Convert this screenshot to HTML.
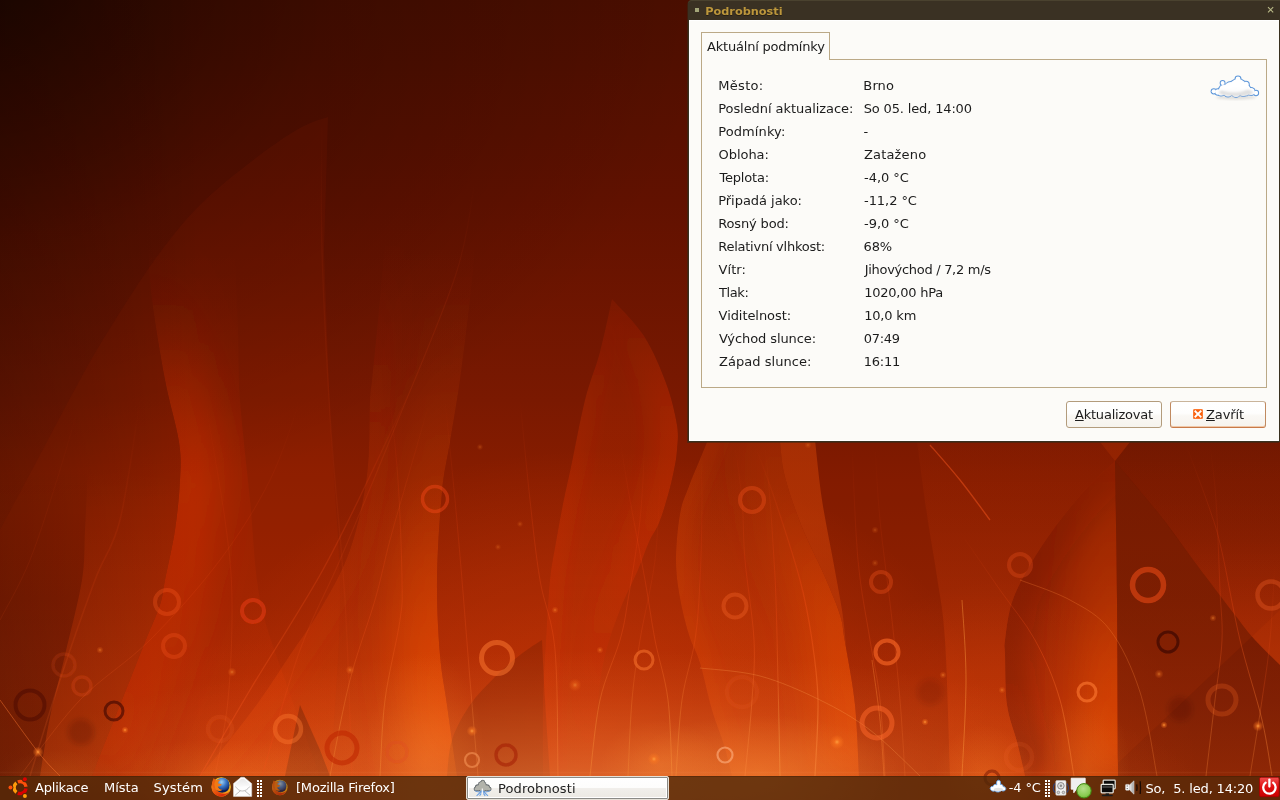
<!DOCTYPE html>
<html lang="cs">
<head>
<meta charset="utf-8">
<title>Podrobnosti</title>
<style>
*{box-sizing:border-box;margin:0;padding:0}
html,body{width:1280px;height:800px;overflow:hidden;background:#5a1202}
body{position:relative;font-family:"DejaVu Sans","Liberation Sans",sans-serif;font-size:13px;color:#1c1c1c;line-height:15px}
#wall{position:absolute;left:0;top:0;width:1280px;height:800px;display:block}
.abs{position:absolute;white-space:nowrap}
#win{position:absolute;left:688px;top:0;width:592px;height:442px;background:#39301f;border-radius:4px 0 0 0;box-shadow:-1px 1px 0 rgba(52,42,24,0.55)}
#title{position:absolute;left:688px;top:0;width:592px;height:20px;background:#3a3123;border-top:1px solid #4a422f;border-radius:4px 0 0 0}
#tdot{position:absolute;left:695px;top:8px;width:4px;height:4px;background:#a3a578}
#ttxt{position:absolute;left:705.2px;top:5px;text-shadow:0 1px 0 rgba(20,14,4,0.5);font-weight:bold;font-size:11.3px;letter-spacing:0px;line-height:13px;color:#bd973c;white-space:nowrap}
#tx{position:absolute;left:1267px;top:6px;width:7px;height:7px}
#body{position:absolute;left:689px;top:20px;width:590px;height:421px;background:#fcfbf8;border-top:1px solid #fff;border-left:1px solid #fff;border-bottom:1px solid #fff}
#nb{position:absolute;left:701px;top:59px;width:566px;height:329px;border:1px solid #bba987}
#tab{position:absolute;left:701px;top:32px;width:129px;height:28px;border:1px solid #bba987;border-bottom:none;background:#fcfbf8}
#tabt{position:absolute;left:707px;top:39px;white-space:nowrap;letter-spacing:-0.2px}
.l,.v{position:absolute;white-space:nowrap;height:15px}
.l{left:718.6px}
.v{left:863.5px}
.btn{position:absolute;top:401px;width:96px;height:27px;border:1px solid #b39c7c;border-radius:3px;background:linear-gradient(#ffffff 0,#fefefd 45%,#faf8f4 55%,#f6f3ed 100%)}
.bt{position:absolute;top:407px;white-space:nowrap}
.bt u{text-decoration:underline;text-decoration-thickness:1px;text-underline-offset:1px}
#bz{border-color:#c9b49a #c08a60 #c87a48 #c08a60;box-shadow:inset 0 -1px 0 #f0c8a8}
#panel{position:absolute;left:0;top:776px;width:1280px;height:24px;background:rgba(72,38,8,0.76);border-top:1px solid rgba(60,24,0,0.35)}
.pt{position:absolute;top:780px;color:#fff;white-space:nowrap;font-size:13px}
#task{position:absolute;left:466px;top:776px;width:203px;height:24px;border:1px solid #e6e0d6;border-radius:2px;background:linear-gradient(#ffffff 0,#fdfdfc 48%,#f1efeb 52%,#ebe8e2 100%);box-shadow:inset 0 0 0 1px #8a8a86,inset 0 0 0 2px #fff}
.l,.v,.bt,.pt,#tabt{transform:translateZ(0);filter:grayscale(1)}
#ttxt{transform:translateZ(0)}
</style>
</head>
<body>
<svg id="wall" viewBox="0 0 1280 800" width="1280" height="800">
<defs><linearGradient id="base" x1="0" y1="0" x2="0" y2="800" gradientUnits="userSpaceOnUse">
<stop offset="0" stop-color="#4b0e00"/>
<stop offset="0.25" stop-color="#611100"/>
<stop offset="0.5" stop-color="#7a1901"/>
<stop offset="0.6" stop-color="#881d00"/>
<stop offset="0.75" stop-color="#942202"/>
<stop offset="0.875" stop-color="#a52a05"/>
<stop offset="0.97" stop-color="#ae3107"/>
</linearGradient>
<radialGradient id="dk" cx="0" cy="0" r="1" gradientUnits="userSpaceOnUse" gradientTransform="translate(-40 -40) scale(760 560)">
<stop offset="0" stop-color="#000" stop-opacity="0.62"/>
<stop offset="0.22" stop-color="#000" stop-opacity="0.42"/>
<stop offset="0.5" stop-color="#000" stop-opacity="0.20"/>
<stop offset="1" stop-color="#000" stop-opacity="0"/>
</radialGradient>
<linearGradient id="dkl" x1="0" y1="0" x2="200" y2="0" gradientUnits="userSpaceOnUse">
<stop offset="0" stop-color="#000" stop-opacity="0.22"/>
<stop offset="1" stop-color="#000" stop-opacity="0"/>
</linearGradient>
<radialGradient id="glow" cx="0.5" cy="0.5" r="0.5">
<stop offset="0" stop-color="#ff8a28" stop-opacity="0.55"/>
<stop offset="1" stop-color="#ff8a28" stop-opacity="0"/>
</radialGradient>
<radialGradient id="cglow" cx="0.5" cy="0.5" r="0.5">
<stop offset="0" stop-color="#ff4a06" stop-opacity="0.34"/>
<stop offset="0.6" stop-color="#ff4a06" stop-opacity="0.18"/>
<stop offset="1" stop-color="#ff4a06" stop-opacity="0"/>
</radialGradient>
<radialGradient id="spot" cx="0.5" cy="0.5" r="0.5">
<stop offset="0" stop-color="#ffa040" stop-opacity="0.95"/>
<stop offset="0.4" stop-color="#ff7a20" stop-opacity="0.5"/>
<stop offset="1" stop-color="#ff7a20" stop-opacity="0"/>
</radialGradient>
<filter id="b1" x="-20%" y="-20%" width="140%" height="140%"><feGaussianBlur stdDeviation="0.7"/></filter>
<filter id="b3" x="-30%" y="-30%" width="160%" height="160%"><feGaussianBlur stdDeviation="2.5"/></filter>
<linearGradient id="g1" x1="0" y1="0" x2="0" y2="800" gradientUnits="userSpaceOnUse"><stop offset="0.588" stop-color="#ff5a0c" stop-opacity="0.000"/><stop offset="0.700" stop-color="#ff5a0c" stop-opacity="0.080"/><stop offset="0.850" stop-color="#ff5a0c" stop-opacity="0.140"/><stop offset="0.970" stop-color="#ff5a0c" stop-opacity="0.180"/></linearGradient>
<linearGradient id="g2" x1="0" y1="0" x2="0" y2="800" gradientUnits="userSpaceOnUse"><stop offset="0.588" stop-color="#200600" stop-opacity="0.000"/><stop offset="0.750" stop-color="#200600" stop-opacity="0.140"/><stop offset="0.970" stop-color="#200600" stop-opacity="0.220"/></linearGradient>
<linearGradient id="g3" x1="0" y1="0" x2="0" y2="800" gradientUnits="userSpaceOnUse"><stop offset="0.312" stop-color="#ff3c00" stop-opacity="0.000"/><stop offset="0.412" stop-color="#ff3c00" stop-opacity="0.030"/><stop offset="0.550" stop-color="#ff3c00" stop-opacity="0.070"/><stop offset="0.970" stop-color="#ff3c00" stop-opacity="0.080"/></linearGradient>
<linearGradient id="g4" x1="0" y1="0" x2="0" y2="800" gradientUnits="userSpaceOnUse"><stop offset="0.312" stop-color="#ff3c00" stop-opacity="0.000"/><stop offset="0.400" stop-color="#ff3c00" stop-opacity="0.060"/><stop offset="0.500" stop-color="#ff3c00" stop-opacity="0.260"/><stop offset="0.600" stop-color="#ff3c00" stop-opacity="0.320"/><stop offset="0.750" stop-color="#ff3c00" stop-opacity="0.280"/><stop offset="0.970" stop-color="#ff3c00" stop-opacity="0.340"/></linearGradient>
<clipPath id="c1"><path d="M148.0 250.0C148.7 258.3 149.2 278.3 152.0 300.0C154.8 321.7 160.5 356.3 165.0 380.0C169.5 403.7 176.5 425.3 179.0 442.0C181.5 458.7 180.7 465.3 180.0 480.0C179.3 494.7 177.5 513.3 175.0 530.0C172.5 546.7 167.5 567.5 165.0 580.0C162.5 592.5 163.3 594.7 160.0 605.0C156.7 615.3 151.7 625.3 145.0 642.0C138.3 658.7 127.5 686.2 120.0 705.0C112.5 723.8 104.7 743.2 100.0 755.0C95.3 766.8 93.3 772.5 92.0 776.0L204.0 776.0C205.3 772.5 207.3 766.8 212.0 755.0C216.7 743.2 224.5 723.8 232.0 705.0C239.5 686.2 250.3 658.7 257.0 642.0C263.7 625.3 268.7 615.3 272.0 605.0C275.3 594.7 274.5 592.5 277.0 580.0C279.5 567.5 284.5 546.7 287.0 530.0C289.5 513.3 291.3 494.7 292.0 480.0C292.7 465.3 293.5 458.7 291.0 442.0C288.5 425.3 281.5 403.7 277.0 380.0C272.5 356.3 266.8 321.7 264.0 300.0C261.2 278.3 260.7 258.3 260.0 250.0Z"/></clipPath>
<filter id="f1" filterUnits="userSpaceOnUse" x="0" y="0" width="1280" height="800"><feGaussianBlur stdDeviation="20.0"/></filter>
<clipPath id="k1"><path d="M148.0 250.0C148.7 258.3 149.2 278.3 152.0 300.0C154.8 321.7 160.5 356.3 165.0 380.0C169.5 403.7 176.5 425.3 179.0 442.0C181.5 458.7 180.7 465.3 180.0 480.0C179.3 494.7 177.5 513.3 175.0 530.0C172.5 546.7 167.5 567.5 165.0 580.0C162.5 592.5 163.3 594.7 160.0 605.0C156.7 615.3 151.7 625.3 145.0 642.0C138.3 658.7 127.5 686.2 120.0 705.0C112.5 723.8 104.7 743.2 100.0 755.0C95.3 766.8 93.3 772.5 92.0 776.0L320.0 776.0C317.5 769.2 310.8 751.0 305.0 735.0C299.2 719.0 292.5 702.5 285.0 680.0C277.5 657.5 265.8 630.0 260.0 600.0C254.2 570.0 253.3 533.3 250.0 500.0C246.7 466.7 242.0 428.3 240.0 400.0C238.0 371.7 238.8 355.0 238.0 330.0C237.2 305.0 235.5 263.3 235.0 250.0Z"/></clipPath>
<linearGradient id="g5" x1="0" y1="0" x2="0" y2="800" gradientUnits="userSpaceOnUse"><stop offset="0.300" stop-color="#ff5a0c" stop-opacity="0.000"/><stop offset="0.475" stop-color="#ff5a0c" stop-opacity="0.030"/><stop offset="0.625" stop-color="#ff5a0c" stop-opacity="0.060"/><stop offset="0.750" stop-color="#ff5a0c" stop-opacity="0.080"/><stop offset="0.850" stop-color="#ff5a0c" stop-opacity="0.140"/><stop offset="0.970" stop-color="#ff5a0c" stop-opacity="0.160"/></linearGradient>
<linearGradient id="g6" x1="0" y1="0" x2="0" y2="800" gradientUnits="userSpaceOnUse"><stop offset="0.312" stop-color="#ff5a0c" stop-opacity="0.000"/><stop offset="0.475" stop-color="#ff5a0c" stop-opacity="0.050"/><stop offset="0.625" stop-color="#ff5a0c" stop-opacity="0.160"/><stop offset="0.750" stop-color="#ff5a0c" stop-opacity="0.340"/><stop offset="0.875" stop-color="#ff5a0c" stop-opacity="0.420"/><stop offset="0.970" stop-color="#ff5a0c" stop-opacity="0.420"/></linearGradient>
<clipPath id="c2"><path d="M475.0 250.0C474.2 258.3 472.5 278.3 470.0 300.0C467.5 321.7 463.3 356.3 460.0 380.0C456.7 403.7 453.0 423.3 450.0 442.0C447.0 460.7 444.2 469.0 442.0 492.0C439.8 515.0 437.3 552.8 437.0 580.0C436.7 607.2 438.3 634.2 440.0 655.0C441.7 675.8 444.2 684.8 447.0 705.0C449.8 725.2 455.3 764.2 457.0 776.0L331.0 776.0C329.3 764.2 323.8 725.2 321.0 705.0C318.2 684.8 315.7 675.8 314.0 655.0C312.3 634.2 310.7 607.2 311.0 580.0C311.3 552.8 313.8 515.0 316.0 492.0C318.2 469.0 321.0 460.7 324.0 442.0C327.0 423.3 330.7 403.7 334.0 380.0C337.3 356.3 341.5 321.7 344.0 300.0C346.5 278.3 348.2 258.3 349.0 250.0Z"/></clipPath>
<filter id="f2" filterUnits="userSpaceOnUse" x="0" y="0" width="1280" height="800"><feGaussianBlur stdDeviation="22.5"/></filter>
<clipPath id="k2"><path d="M385.0 240.0C383.8 253.3 380.2 296.7 378.0 320.0C375.8 343.3 373.3 366.7 372.0 380.0C370.7 393.3 370.8 384.2 370.0 400.0C369.2 415.8 370.3 450.0 367.0 475.0C363.7 500.0 357.8 527.5 350.0 550.0C342.2 572.5 330.0 592.5 320.0 610.0C310.0 627.5 300.0 640.0 290.0 655.0C280.0 670.0 270.3 685.5 260.0 700.0C249.7 714.5 238.0 729.3 228.0 742.0C218.0 754.7 204.7 770.3 200.0 776.0L457.0 776.0C455.3 764.2 449.8 725.2 447.0 705.0C444.2 684.8 441.7 675.8 440.0 655.0C438.3 634.2 436.7 607.2 437.0 580.0C437.3 552.8 439.8 515.0 442.0 492.0C444.2 469.0 447.0 460.7 450.0 442.0C453.0 423.3 456.7 403.7 460.0 380.0C463.3 356.3 467.5 321.7 470.0 300.0C472.5 278.3 474.2 258.3 475.0 250.0Z"/></clipPath>
<linearGradient id="g7" x1="0" y1="0" x2="0" y2="800" gradientUnits="userSpaceOnUse"><stop offset="0.300" stop-color="#ff3c00" stop-opacity="0.000"/><stop offset="0.475" stop-color="#ff3c00" stop-opacity="0.050"/><stop offset="0.625" stop-color="#ff3c00" stop-opacity="0.080"/><stop offset="0.812" stop-color="#ff3c00" stop-opacity="0.080"/><stop offset="0.970" stop-color="#ff3c00" stop-opacity="0.080"/></linearGradient>
<clipPath id="c3"><path d="M385.0 240.0C383.8 253.3 380.2 296.7 378.0 320.0C375.8 343.3 373.3 366.7 372.0 380.0C370.7 393.3 370.8 384.2 370.0 400.0C369.2 415.8 370.3 450.0 367.0 475.0C363.7 500.0 357.8 527.5 350.0 550.0C342.2 572.5 330.0 592.5 320.0 610.0C310.0 627.5 300.0 640.0 290.0 655.0C280.0 670.0 270.3 685.5 260.0 700.0C249.7 714.5 238.0 729.3 228.0 742.0C218.0 754.7 204.7 770.3 200.0 776.0L256.0 776.0C260.7 770.3 274.0 754.7 284.0 742.0C294.0 729.3 305.7 714.5 316.0 700.0C326.3 685.5 336.0 670.0 346.0 655.0C356.0 640.0 366.0 627.5 376.0 610.0C386.0 592.5 398.2 572.5 406.0 550.0C413.8 527.5 419.7 500.0 423.0 475.0C426.3 450.0 425.2 415.8 426.0 400.0C426.8 384.2 426.7 393.3 428.0 380.0C429.3 366.7 431.8 343.3 434.0 320.0C436.2 296.7 439.8 253.3 441.0 240.0Z"/></clipPath>
<filter id="f3" filterUnits="userSpaceOnUse" x="0" y="0" width="1280" height="800"><feGaussianBlur stdDeviation="10.0"/></filter>
<clipPath id="k3"><path d="M385.0 240.0C383.8 253.3 380.2 296.7 378.0 320.0C375.8 343.3 373.3 366.7 372.0 380.0C370.7 393.3 370.8 384.2 370.0 400.0C369.2 415.8 370.3 450.0 367.0 475.0C363.7 500.0 357.8 527.5 350.0 550.0C342.2 572.5 330.0 592.5 320.0 610.0C310.0 627.5 300.0 640.0 290.0 655.0C280.0 670.0 270.3 685.5 260.0 700.0C249.7 714.5 238.0 729.3 228.0 742.0C218.0 754.7 204.7 770.3 200.0 776.0L457.0 776.0C455.3 764.2 449.8 725.2 447.0 705.0C444.2 684.8 441.7 675.8 440.0 655.0C438.3 634.2 436.7 607.2 437.0 580.0C437.3 552.8 439.8 515.0 442.0 492.0C444.2 469.0 447.0 460.7 450.0 442.0C453.0 423.3 456.7 403.7 460.0 380.0C463.3 356.3 467.5 321.7 470.0 300.0C472.5 278.3 474.2 258.3 475.0 250.0Z"/></clipPath>
<linearGradient id="g8" x1="0" y1="0" x2="0" y2="800" gradientUnits="userSpaceOnUse"><stop offset="0.374" stop-color="#ff3c00" stop-opacity="0.080"/><stop offset="0.500" stop-color="#ff3c00" stop-opacity="0.140"/><stop offset="0.650" stop-color="#ff3c00" stop-opacity="0.140"/><stop offset="0.800" stop-color="#ff3c00" stop-opacity="0.060"/><stop offset="0.970" stop-color="#ff3c00" stop-opacity="0.040"/></linearGradient>
<linearGradient id="g9" x1="0" y1="0" x2="0" y2="800" gradientUnits="userSpaceOnUse"><stop offset="0.374" stop-color="#ff3c00" stop-opacity="0.000"/><stop offset="0.450" stop-color="#ff3c00" stop-opacity="0.080"/><stop offset="0.550" stop-color="#ff3c00" stop-opacity="0.180"/><stop offset="0.675" stop-color="#ff3c00" stop-opacity="0.140"/><stop offset="0.800" stop-color="#ff3c00" stop-opacity="0.040"/><stop offset="0.970" stop-color="#ff3c00" stop-opacity="0.000"/></linearGradient>
<clipPath id="c4"><path d="M612.0 299.0C617.3 305.2 635.0 322.0 644.0 336.0C653.0 350.0 660.5 368.2 666.0 383.0C671.5 397.8 675.2 413.8 677.0 425.0C678.8 436.2 677.5 442.5 677.0 450.0C676.5 457.5 675.5 462.5 674.0 470.0C672.5 477.5 670.5 486.2 668.0 495.0C665.5 503.8 662.2 515.2 659.0 523.0C655.8 530.8 652.5 534.2 649.0 542.0C645.5 549.8 642.8 558.7 638.0 570.0C633.2 581.3 625.7 595.0 620.0 610.0C614.3 625.0 608.0 641.7 604.0 660.0C600.0 678.3 598.0 700.7 596.0 720.0C594.0 739.3 592.7 766.7 592.0 776.0L522.0 776.0C522.7 766.7 524.0 739.3 526.0 720.0C528.0 700.7 530.0 678.3 534.0 660.0C538.0 641.7 544.3 625.0 550.0 610.0C555.7 595.0 563.2 581.3 568.0 570.0C572.8 558.7 575.5 549.8 579.0 542.0C582.5 534.2 585.8 530.8 589.0 523.0C592.2 515.2 595.5 503.8 598.0 495.0C600.5 486.2 602.5 477.5 604.0 470.0C605.5 462.5 606.5 457.5 607.0 450.0C607.5 442.5 608.8 436.2 607.0 425.0C605.2 413.8 601.5 397.8 596.0 383.0C590.5 368.2 583.0 350.0 574.0 336.0C565.0 322.0 547.3 305.2 542.0 299.0Z"/></clipPath>
<filter id="f4" filterUnits="userSpaceOnUse" x="0" y="0" width="1280" height="800"><feGaussianBlur stdDeviation="12.5"/></filter>
<clipPath id="k4"><path d="M612.0 299.0C617.3 305.2 635.0 322.0 644.0 336.0C653.0 350.0 660.5 368.2 666.0 383.0C671.5 397.8 675.2 413.8 677.0 425.0C678.8 436.2 677.5 442.5 677.0 450.0C676.5 457.5 675.5 462.5 674.0 470.0C672.5 477.5 670.5 486.2 668.0 495.0C665.5 503.8 662.2 515.2 659.0 523.0C655.8 530.8 652.5 534.2 649.0 542.0C645.5 549.8 642.8 558.7 638.0 570.0C633.2 581.3 625.7 595.0 620.0 610.0C614.3 625.0 608.0 641.7 604.0 660.0C600.0 678.3 598.0 700.7 596.0 720.0C594.0 739.3 592.7 766.7 592.0 776.0L543.0 776.0C543.0 763.3 542.5 722.7 543.0 700.0C543.5 677.3 544.8 660.0 546.0 640.0C547.2 620.0 548.3 596.3 550.0 580.0C551.7 563.7 553.8 554.7 556.0 542.0C558.2 529.3 560.5 516.5 563.0 504.0C565.5 491.5 567.3 484.3 571.0 467.0C574.7 449.7 580.2 419.2 585.0 400.0C589.8 380.8 595.5 368.8 600.0 352.0C604.5 335.2 610.0 307.8 612.0 299.0Z"/></clipPath>
<linearGradient id="g10" x1="0" y1="0" x2="0" y2="800" gradientUnits="userSpaceOnUse"><stop offset="0.374" stop-color="#ff3c00" stop-opacity="0.000"/><stop offset="0.500" stop-color="#ff3c00" stop-opacity="0.060"/><stop offset="0.625" stop-color="#ff3c00" stop-opacity="0.100"/><stop offset="0.800" stop-color="#ff3c00" stop-opacity="0.100"/><stop offset="0.970" stop-color="#ff3c00" stop-opacity="0.100"/></linearGradient>
<clipPath id="c5"><path d="M612.0 299.0C610.0 307.8 604.5 335.2 600.0 352.0C595.5 368.8 589.8 380.8 585.0 400.0C580.2 419.2 574.7 449.7 571.0 467.0C567.3 484.3 565.5 491.5 563.0 504.0C560.5 516.5 558.2 529.3 556.0 542.0C553.8 554.7 551.7 563.7 550.0 580.0C548.3 596.3 547.2 620.0 546.0 640.0C544.8 660.0 543.5 677.3 543.0 700.0C542.5 722.7 543.0 763.3 543.0 776.0L585.0 776.0C585.0 763.3 584.5 722.7 585.0 700.0C585.5 677.3 586.8 660.0 588.0 640.0C589.2 620.0 590.3 596.3 592.0 580.0C593.7 563.7 595.8 554.7 598.0 542.0C600.2 529.3 602.5 516.5 605.0 504.0C607.5 491.5 609.3 484.3 613.0 467.0C616.7 449.7 622.2 419.2 627.0 400.0C631.8 380.8 637.5 368.8 642.0 352.0C646.5 335.2 652.0 307.8 654.0 299.0Z"/></clipPath>
<filter id="f5" filterUnits="userSpaceOnUse" x="0" y="0" width="1280" height="800"><feGaussianBlur stdDeviation="7.5"/></filter>
<clipPath id="k5"><path d="M612.0 299.0C617.3 305.2 635.0 322.0 644.0 336.0C653.0 350.0 660.5 368.2 666.0 383.0C671.5 397.8 675.2 413.8 677.0 425.0C678.8 436.2 677.5 442.5 677.0 450.0C676.5 457.5 675.5 462.5 674.0 470.0C672.5 477.5 670.5 486.2 668.0 495.0C665.5 503.8 662.2 515.2 659.0 523.0C655.8 530.8 652.5 534.2 649.0 542.0C645.5 549.8 642.8 558.7 638.0 570.0C633.2 581.3 625.7 595.0 620.0 610.0C614.3 625.0 608.0 641.7 604.0 660.0C600.0 678.3 598.0 700.7 596.0 720.0C594.0 739.3 592.7 766.7 592.0 776.0L543.0 776.0C543.0 763.3 542.5 722.7 543.0 700.0C543.5 677.3 544.8 660.0 546.0 640.0C547.2 620.0 548.3 596.3 550.0 580.0C551.7 563.7 553.8 554.7 556.0 542.0C558.2 529.3 560.5 516.5 563.0 504.0C565.5 491.5 567.3 484.3 571.0 467.0C574.7 449.7 580.2 419.2 585.0 400.0C589.8 380.8 595.5 368.8 600.0 352.0C604.5 335.2 610.0 307.8 612.0 299.0Z"/></clipPath>
<linearGradient id="g11" x1="0" y1="0" x2="0" y2="800" gradientUnits="userSpaceOnUse"><stop offset="0.525" stop-color="#ff5a0c" stop-opacity="0.100"/><stop offset="0.650" stop-color="#ff5a0c" stop-opacity="0.120"/><stop offset="0.800" stop-color="#ff5a0c" stop-opacity="0.160"/><stop offset="0.970" stop-color="#ff5a0c" stop-opacity="0.200"/></linearGradient>
<linearGradient id="g12" x1="0" y1="0" x2="0" y2="800" gradientUnits="userSpaceOnUse"><stop offset="0.525" stop-color="#ff5a0c" stop-opacity="0.080"/><stop offset="0.650" stop-color="#ff5a0c" stop-opacity="0.140"/><stop offset="0.750" stop-color="#ff5a0c" stop-opacity="0.300"/><stop offset="0.850" stop-color="#ff5a0c" stop-opacity="0.360"/><stop offset="0.970" stop-color="#ff5a0c" stop-opacity="0.340"/></linearGradient>
<clipPath id="c6"><path d="M778.0 420.0C778.3 423.7 778.8 432.5 780.0 442.0C781.2 451.5 781.3 462.8 785.0 477.0C788.7 491.2 795.3 510.3 802.0 527.0C808.7 543.7 818.7 562.3 825.0 577.0C831.3 591.7 836.7 604.2 840.0 615.0C843.3 625.8 842.5 627.0 845.0 642.0C847.5 657.0 852.7 682.7 855.0 705.0C857.3 727.3 858.3 764.2 859.0 776.0L747.0 776.0C746.3 764.2 745.3 727.3 743.0 705.0C740.7 682.7 735.5 657.0 733.0 642.0C730.5 627.0 731.3 625.8 728.0 615.0C724.7 604.2 719.3 591.7 713.0 577.0C706.7 562.3 696.7 543.7 690.0 527.0C683.3 510.3 676.7 491.2 673.0 477.0C669.3 462.8 669.2 451.5 668.0 442.0C666.8 432.5 666.3 423.7 666.0 420.0Z"/></clipPath>
<filter id="f6" filterUnits="userSpaceOnUse" x="0" y="0" width="1280" height="800"><feGaussianBlur stdDeviation="20.0"/></filter>
<clipPath id="k6"><path d="M714.0 420.0C712.8 423.7 711.2 431.0 707.0 442.0C702.8 453.0 693.5 474.0 689.0 486.0C684.5 498.0 682.2 501.7 680.0 514.0C677.8 526.3 676.0 546.0 676.0 560.0C676.0 574.0 677.8 585.5 680.0 598.0C682.2 610.5 685.7 624.2 689.0 635.0C692.3 645.8 696.2 650.5 700.0 663.0C703.8 675.5 708.0 696.3 712.0 710.0C716.0 723.7 720.7 734.0 724.0 745.0C727.3 756.0 730.7 770.8 732.0 776.0L859.0 776.0C858.3 764.2 857.3 727.3 855.0 705.0C852.7 682.7 847.5 657.0 845.0 642.0C842.5 627.0 843.3 625.8 840.0 615.0C836.7 604.2 831.3 591.7 825.0 577.0C818.7 562.3 808.7 543.7 802.0 527.0C795.3 510.3 788.7 491.2 785.0 477.0C781.3 462.8 781.2 451.5 780.0 442.0C778.8 432.5 778.3 423.7 778.0 420.0Z"/></clipPath>
<linearGradient id="g13" x1="0" y1="0" x2="0" y2="800" gradientUnits="userSpaceOnUse"><stop offset="0.525" stop-color="#ff5a0c" stop-opacity="0.340"/><stop offset="0.650" stop-color="#ff5a0c" stop-opacity="0.360"/><stop offset="0.750" stop-color="#ff5a0c" stop-opacity="0.300"/><stop offset="0.806" stop-color="#ff5a0c" stop-opacity="0.200"/></linearGradient>
<linearGradient id="g14" x1="0" y1="0" x2="0" y2="800" gradientUnits="userSpaceOnUse"><stop offset="0.525" stop-color="#ff5a0c" stop-opacity="0.100"/><stop offset="0.650" stop-color="#ff5a0c" stop-opacity="0.120"/><stop offset="0.800" stop-color="#ff5a0c" stop-opacity="0.100"/><stop offset="0.970" stop-color="#ff5a0c" stop-opacity="0.050"/></linearGradient>
<clipPath id="c7"><path d="M714.0 420.0C712.8 423.7 711.2 431.0 707.0 442.0C702.8 453.0 693.5 474.0 689.0 486.0C684.5 498.0 682.2 501.7 680.0 514.0C677.8 526.3 676.0 546.0 676.0 560.0C676.0 574.0 677.8 585.5 680.0 598.0C682.2 610.5 685.7 624.2 689.0 635.0C692.3 645.8 696.2 650.5 700.0 663.0C703.8 675.5 708.0 696.3 712.0 710.0C716.0 723.7 720.7 734.0 724.0 745.0C727.3 756.0 730.7 770.8 732.0 776.0L774.0 776.0C772.7 770.8 769.3 756.0 766.0 745.0C762.7 734.0 758.0 723.7 754.0 710.0C750.0 696.3 745.8 675.5 742.0 663.0C738.2 650.5 734.3 645.8 731.0 635.0C727.7 624.2 724.2 610.5 722.0 598.0C719.8 585.5 718.0 574.0 718.0 560.0C718.0 546.0 719.8 526.3 722.0 514.0C724.2 501.7 726.5 498.0 731.0 486.0C735.5 474.0 744.8 453.0 749.0 442.0C753.2 431.0 754.8 423.7 756.0 420.0Z"/></clipPath>
<filter id="f7" filterUnits="userSpaceOnUse" x="0" y="0" width="1280" height="800"><feGaussianBlur stdDeviation="7.5"/></filter>
<clipPath id="k7"><path d="M714.0 420.0C712.8 423.7 711.2 431.0 707.0 442.0C702.8 453.0 693.5 474.0 689.0 486.0C684.5 498.0 682.2 501.7 680.0 514.0C677.8 526.3 676.0 546.0 676.0 560.0C676.0 574.0 677.8 585.5 680.0 598.0C682.2 610.5 685.7 624.2 689.0 635.0C692.3 645.8 696.2 650.5 700.0 663.0C703.8 675.5 708.0 696.3 712.0 710.0C716.0 723.7 720.7 734.0 724.0 745.0C727.3 756.0 730.7 770.8 732.0 776.0L859.0 776.0C858.3 764.2 857.3 727.3 855.0 705.0C852.7 682.7 847.5 657.0 845.0 642.0C842.5 627.0 843.3 625.8 840.0 615.0C836.7 604.2 831.3 591.7 825.0 577.0C818.7 562.3 808.7 543.7 802.0 527.0C795.3 510.3 788.7 491.2 785.0 477.0C781.3 462.8 781.2 451.5 780.0 442.0C778.8 432.5 778.3 423.7 778.0 420.0Z"/></clipPath>
<linearGradient id="g15" x1="0" y1="0" x2="0" y2="800" gradientUnits="userSpaceOnUse"><stop offset="0.550" stop-color="#ff5a0c" stop-opacity="0.000"/><stop offset="0.650" stop-color="#ff5a0c" stop-opacity="0.040"/><stop offset="0.800" stop-color="#ff5a0c" stop-opacity="0.120"/><stop offset="0.970" stop-color="#ff5a0c" stop-opacity="0.180"/></linearGradient>
<linearGradient id="g16" x1="0" y1="0" x2="0" y2="800" gradientUnits="userSpaceOnUse"><stop offset="0.576" stop-color="#ff3c00" stop-opacity="0.060"/><stop offset="0.750" stop-color="#ff3c00" stop-opacity="0.030"/><stop offset="0.970" stop-color="#ff3c00" stop-opacity="0.000"/></linearGradient>
<linearGradient id="g17" x1="0" y1="0" x2="0" y2="800" gradientUnits="userSpaceOnUse"><stop offset="0.576" stop-color="#ff5a0c" stop-opacity="0.040"/><stop offset="0.700" stop-color="#ff5a0c" stop-opacity="0.160"/><stop offset="0.850" stop-color="#ff5a0c" stop-opacity="0.420"/><stop offset="0.970" stop-color="#ff5a0c" stop-opacity="0.500"/></linearGradient>
<clipPath id="c8"><path d="M1115.0 461.0C1115.3 484.2 1116.5 547.5 1117.0 600.0C1117.5 652.5 1117.8 746.7 1118.0 776.0L1006.0 776.0C1005.8 746.7 1005.5 652.5 1005.0 600.0C1004.5 547.5 1003.3 484.2 1003.0 461.0Z"/></clipPath>
<filter id="f8" filterUnits="userSpaceOnUse" x="0" y="0" width="1280" height="800"><feGaussianBlur stdDeviation="20.0"/></filter>
<clipPath id="k8"><path d="M1115.0 461.0C1110.0 465.8 1095.0 479.0 1085.0 490.0C1075.0 501.0 1064.2 514.5 1055.0 527.0C1045.8 539.5 1037.2 552.5 1030.0 565.0C1022.8 577.5 1016.2 589.5 1012.0 602.0C1007.8 614.5 1006.2 631.2 1005.0 640.0C1003.8 648.8 1004.7 644.2 1005.0 655.0C1005.3 665.8 1005.0 690.5 1007.0 705.0C1009.0 719.5 1014.0 730.2 1017.0 742.0C1020.0 753.8 1023.7 770.3 1025.0 776.0L1117.0 776.0L1118.0 776.0C1117.8 746.7 1117.5 652.5 1117.0 600.0C1116.5 547.5 1115.3 484.2 1115.0 461.0Z"/></clipPath>
<linearGradient id="g18" x1="0" y1="0" x2="0" y2="800" gradientUnits="userSpaceOnUse"><stop offset="0.576" stop-color="#300a00" stop-opacity="0.100"/><stop offset="0.750" stop-color="#300a00" stop-opacity="0.160"/><stop offset="0.850" stop-color="#300a00" stop-opacity="0.200"/><stop offset="0.970" stop-color="#300a00" stop-opacity="0.240"/></linearGradient>
<clipPath id="c9"><path d="M1115.0 461.0C1110.0 465.8 1095.0 479.0 1085.0 490.0C1075.0 501.0 1064.2 514.5 1055.0 527.0C1045.8 539.5 1037.2 552.5 1030.0 565.0C1022.8 577.5 1016.2 589.5 1012.0 602.0C1007.8 614.5 1006.2 631.2 1005.0 640.0C1003.8 648.8 1004.7 644.2 1005.0 655.0C1005.3 665.8 1005.0 690.5 1007.0 705.0C1009.0 719.5 1014.0 730.2 1017.0 742.0C1020.0 753.8 1023.7 770.3 1025.0 776.0L1095.0 776.0C1093.7 770.3 1090.0 753.8 1087.0 742.0C1084.0 730.2 1079.0 719.5 1077.0 705.0C1075.0 690.5 1075.3 665.8 1075.0 655.0C1074.7 644.2 1073.8 648.8 1075.0 640.0C1076.2 631.2 1077.8 614.5 1082.0 602.0C1086.2 589.5 1092.8 577.5 1100.0 565.0C1107.2 552.5 1115.8 539.5 1125.0 527.0C1134.2 514.5 1145.0 501.0 1155.0 490.0C1165.0 479.0 1180.0 465.8 1185.0 461.0Z"/></clipPath>
<filter id="f9" filterUnits="userSpaceOnUse" x="0" y="0" width="1280" height="800"><feGaussianBlur stdDeviation="12.5"/></filter>
<clipPath id="k9"><path d="M1115.0 461.0C1110.0 465.8 1095.0 479.0 1085.0 490.0C1075.0 501.0 1064.2 514.5 1055.0 527.0C1045.8 539.5 1037.2 552.5 1030.0 565.0C1022.8 577.5 1016.2 589.5 1012.0 602.0C1007.8 614.5 1006.2 631.2 1005.0 640.0C1003.8 648.8 1004.7 644.2 1005.0 655.0C1005.3 665.8 1005.0 690.5 1007.0 705.0C1009.0 719.5 1014.0 730.2 1017.0 742.0C1020.0 753.8 1023.7 770.3 1025.0 776.0L1117.0 776.0L1118.0 776.0C1117.8 746.7 1117.5 652.5 1117.0 600.0C1116.5 547.5 1115.3 484.2 1115.0 461.0Z"/></clipPath>
<linearGradient id="g19" x1="0" y1="0" x2="0" y2="800" gradientUnits="userSpaceOnUse"><stop offset="0.576" stop-color="#2a0800" stop-opacity="0.300"/><stop offset="0.750" stop-color="#2a0800" stop-opacity="0.300"/><stop offset="0.875" stop-color="#2a0800" stop-opacity="0.300"/><stop offset="0.970" stop-color="#2a0800" stop-opacity="0.240"/></linearGradient>
<linearGradient id="g20" x1="0" y1="0" x2="0" y2="800" gradientUnits="userSpaceOnUse"><stop offset="0.552" stop-color="#ff5a0c" stop-opacity="0.000"/><stop offset="0.675" stop-color="#ff5a0c" stop-opacity="0.020"/><stop offset="0.750" stop-color="#ff5a0c" stop-opacity="0.070"/><stop offset="0.831" stop-color="#ff5a0c" stop-opacity="0.120"/></linearGradient>
<linearGradient id="g21" x1="0" y1="0" x2="0" y2="800" gradientUnits="userSpaceOnUse"><stop offset="0.552" stop-color="#1a0500" stop-opacity="0.140"/><stop offset="0.650" stop-color="#1a0500" stop-opacity="0.100"/><stop offset="0.762" stop-color="#1a0500" stop-opacity="0.000"/></linearGradient>
<radialGradient id="bstrip" cx="0.5" cy="0.5" r="0.5"><stop offset="0" stop-color="#ffa860" stop-opacity="0.46"/><stop offset="0.35" stop-color="#ffa058" stop-opacity="0.26"/><stop offset="0.7" stop-color="#ff9a50" stop-opacity="0.09"/><stop offset="1" stop-color="#ff9a50" stop-opacity="0"/></radialGradient>
<linearGradient id="g22" x1="0" y1="380" x2="0" y2="800" gradientUnits="userSpaceOnUse"><stop offset="0.000" stop-color="#ff4a14" stop-opacity="0.000"/><stop offset="0.310" stop-color="#ff4a14" stop-opacity="0.180"/><stop offset="0.619" stop-color="#ff5a1c" stop-opacity="0.240"/><stop offset="0.810" stop-color="#ff5a20" stop-opacity="0.300"/><stop offset="1.000" stop-color="#ff5a20" stop-opacity="0.300"/></linearGradient>
<linearGradient id="g23" x1="0" y1="180" x2="0" y2="800" gradientUnits="userSpaceOnUse"><stop offset="0.000" stop-color="#ff4a14" stop-opacity="0.000"/><stop offset="0.210" stop-color="#ff4a14" stop-opacity="0.096"/><stop offset="0.742" stop-color="#ff5a1c" stop-opacity="0.128"/><stop offset="0.871" stop-color="#ff4a18" stop-opacity="0.160"/><stop offset="1.000" stop-color="#ff4a18" stop-opacity="0.160"/></linearGradient>
<linearGradient id="g24" x1="0" y1="117" x2="0" y2="800" gradientUnits="userSpaceOnUse"><stop offset="0.000" stop-color="#ff4a14" stop-opacity="0.000"/><stop offset="0.190" stop-color="#ff4a14" stop-opacity="0.060"/><stop offset="0.766" stop-color="#ff5a1c" stop-opacity="0.080"/><stop offset="0.883" stop-color="#ff4a18" stop-opacity="0.100"/><stop offset="1.000" stop-color="#ff4a18" stop-opacity="0.100"/></linearGradient>
<linearGradient id="g25" x1="0" y1="400" x2="0" y2="800" gradientUnits="userSpaceOnUse"><stop offset="0.000" stop-color="#ff4a14" stop-opacity="0.000"/><stop offset="0.325" stop-color="#ff4a14" stop-opacity="0.108"/><stop offset="0.600" stop-color="#ff5a1c" stop-opacity="0.144"/><stop offset="0.800" stop-color="#ff6a28" stop-opacity="0.180"/><stop offset="1.000" stop-color="#ff6a28" stop-opacity="0.180"/></linearGradient>
<linearGradient id="g26" x1="0" y1="400" x2="0" y2="800" gradientUnits="userSpaceOnUse"><stop offset="0.000" stop-color="#ff4a14" stop-opacity="0.000"/><stop offset="0.325" stop-color="#ff4a14" stop-opacity="0.096"/><stop offset="0.600" stop-color="#ff5a1c" stop-opacity="0.128"/><stop offset="0.800" stop-color="#ff6a28" stop-opacity="0.160"/><stop offset="1.000" stop-color="#ff6a28" stop-opacity="0.160"/></linearGradient>
<linearGradient id="g27" x1="0" y1="400" x2="0" y2="800" gradientUnits="userSpaceOnUse"><stop offset="0.000" stop-color="#ff4a14" stop-opacity="0.000"/><stop offset="0.325" stop-color="#ff4a14" stop-opacity="0.072"/><stop offset="0.600" stop-color="#ff5a1c" stop-opacity="0.096"/><stop offset="0.800" stop-color="#ff5a20" stop-opacity="0.120"/><stop offset="1.000" stop-color="#ff5a20" stop-opacity="0.120"/></linearGradient>
<linearGradient id="g28" x1="0" y1="400" x2="0" y2="800" gradientUnits="userSpaceOnUse"><stop offset="0.000" stop-color="#ff4a14" stop-opacity="0.000"/><stop offset="0.325" stop-color="#ff4a14" stop-opacity="0.096"/><stop offset="0.600" stop-color="#ff5a1c" stop-opacity="0.128"/><stop offset="0.800" stop-color="#ff6a28" stop-opacity="0.160"/><stop offset="1.000" stop-color="#ff6a28" stop-opacity="0.160"/></linearGradient>
<linearGradient id="g29" x1="0" y1="400" x2="0" y2="800" gradientUnits="userSpaceOnUse"><stop offset="0.000" stop-color="#ff4a14" stop-opacity="0.000"/><stop offset="0.325" stop-color="#ff4a14" stop-opacity="0.192"/><stop offset="0.600" stop-color="#ff5a1c" stop-opacity="0.256"/><stop offset="0.800" stop-color="#ff9040" stop-opacity="0.320"/><stop offset="1.000" stop-color="#ff9040" stop-opacity="0.320"/></linearGradient>
<linearGradient id="g30" x1="0" y1="400" x2="0" y2="800" gradientUnits="userSpaceOnUse"><stop offset="0.000" stop-color="#ff4a14" stop-opacity="0.000"/><stop offset="0.325" stop-color="#ff4a14" stop-opacity="0.156"/><stop offset="0.600" stop-color="#ff5a1c" stop-opacity="0.208"/><stop offset="0.800" stop-color="#ff9040" stop-opacity="0.260"/><stop offset="1.000" stop-color="#ff9040" stop-opacity="0.260"/></linearGradient>
<linearGradient id="g31" x1="0" y1="400" x2="0" y2="800" gradientUnits="userSpaceOnUse"><stop offset="0.000" stop-color="#ff4a14" stop-opacity="0.000"/><stop offset="0.325" stop-color="#ff4a14" stop-opacity="0.180"/><stop offset="0.600" stop-color="#ff5a1c" stop-opacity="0.240"/><stop offset="0.800" stop-color="#ffa040" stop-opacity="0.300"/><stop offset="1.000" stop-color="#ffa040" stop-opacity="0.300"/></linearGradient>
<linearGradient id="g32" x1="0" y1="400" x2="0" y2="800" gradientUnits="userSpaceOnUse"><stop offset="0.000" stop-color="#ff4a14" stop-opacity="0.000"/><stop offset="0.325" stop-color="#ff4a14" stop-opacity="0.168"/><stop offset="0.600" stop-color="#ff5a1c" stop-opacity="0.224"/><stop offset="0.800" stop-color="#ffa040" stop-opacity="0.280"/><stop offset="1.000" stop-color="#ffa040" stop-opacity="0.280"/></linearGradient>
<linearGradient id="g33" x1="0" y1="440" x2="0" y2="800" gradientUnits="userSpaceOnUse"><stop offset="0.000" stop-color="#ff4a14" stop-opacity="0.000"/><stop offset="0.361" stop-color="#ff4a14" stop-opacity="0.192"/><stop offset="0.556" stop-color="#ff5a1c" stop-opacity="0.256"/><stop offset="0.778" stop-color="#ffa040" stop-opacity="0.320"/><stop offset="1.000" stop-color="#ffa040" stop-opacity="0.320"/></linearGradient>
<linearGradient id="g34" x1="0" y1="480" x2="0" y2="800" gradientUnits="userSpaceOnUse"><stop offset="0.000" stop-color="#ff4a14" stop-opacity="0.000"/><stop offset="0.406" stop-color="#ff4a14" stop-opacity="0.144"/><stop offset="0.500" stop-color="#ff5a1c" stop-opacity="0.192"/><stop offset="0.750" stop-color="#ffa040" stop-opacity="0.240"/><stop offset="1.000" stop-color="#ffa040" stop-opacity="0.240"/></linearGradient>
<linearGradient id="g35" x1="0" y1="440" x2="0" y2="800" gradientUnits="userSpaceOnUse"><stop offset="0.000" stop-color="#ff4a14" stop-opacity="0.000"/><stop offset="0.361" stop-color="#ff4a14" stop-opacity="0.192"/><stop offset="0.556" stop-color="#ff5a1c" stop-opacity="0.256"/><stop offset="0.778" stop-color="#ffa040" stop-opacity="0.320"/><stop offset="1.000" stop-color="#ffa040" stop-opacity="0.320"/></linearGradient>
<linearGradient id="g36" x1="0" y1="445" x2="0" y2="800" gradientUnits="userSpaceOnUse"><stop offset="0.000" stop-color="#ff4a14" stop-opacity="0.000"/><stop offset="0.366" stop-color="#ff4a14" stop-opacity="0.168"/><stop offset="0.549" stop-color="#ff5a1c" stop-opacity="0.224"/><stop offset="0.775" stop-color="#ffa040" stop-opacity="0.280"/><stop offset="1.000" stop-color="#ffa040" stop-opacity="0.280"/></linearGradient>
<linearGradient id="g37" x1="0" y1="445" x2="0" y2="800" gradientUnits="userSpaceOnUse"><stop offset="0.000" stop-color="#ff4a14" stop-opacity="0.000"/><stop offset="0.366" stop-color="#ff4a14" stop-opacity="0.192"/><stop offset="0.549" stop-color="#ff5a1c" stop-opacity="0.256"/><stop offset="0.775" stop-color="#ff9040" stop-opacity="0.320"/><stop offset="1.000" stop-color="#ff9040" stop-opacity="0.320"/></linearGradient>
<linearGradient id="g38" x1="0" y1="445" x2="0" y2="800" gradientUnits="userSpaceOnUse"><stop offset="0.000" stop-color="#ff4a14" stop-opacity="0.000"/><stop offset="0.366" stop-color="#ff4a14" stop-opacity="0.204"/><stop offset="0.549" stop-color="#ff5a1c" stop-opacity="0.272"/><stop offset="0.775" stop-color="#ffb050" stop-opacity="0.340"/><stop offset="1.000" stop-color="#ffb050" stop-opacity="0.340"/></linearGradient>
<linearGradient id="g39" x1="0" y1="445" x2="0" y2="800" gradientUnits="userSpaceOnUse"><stop offset="0.000" stop-color="#ff4a14" stop-opacity="0.000"/><stop offset="0.366" stop-color="#ff4a14" stop-opacity="0.252"/><stop offset="0.549" stop-color="#ff5a1c" stop-opacity="0.336"/><stop offset="0.775" stop-color="#ff9040" stop-opacity="0.420"/><stop offset="1.000" stop-color="#ff9040" stop-opacity="0.420"/></linearGradient>
<linearGradient id="g40" x1="0" y1="445" x2="0" y2="800" gradientUnits="userSpaceOnUse"><stop offset="0.000" stop-color="#ff4a14" stop-opacity="0.000"/><stop offset="0.366" stop-color="#ff4a14" stop-opacity="0.156"/><stop offset="0.549" stop-color="#ff5a1c" stop-opacity="0.208"/><stop offset="0.775" stop-color="#ff7a30" stop-opacity="0.260"/><stop offset="1.000" stop-color="#ff7a30" stop-opacity="0.260"/></linearGradient>
<linearGradient id="g41" x1="0" y1="445" x2="0" y2="800" gradientUnits="userSpaceOnUse"><stop offset="0.000" stop-color="#ff4a14" stop-opacity="0.000"/><stop offset="0.366" stop-color="#ff4a14" stop-opacity="0.120"/><stop offset="0.549" stop-color="#ff5a1c" stop-opacity="0.160"/><stop offset="0.775" stop-color="#ff7a30" stop-opacity="0.200"/><stop offset="1.000" stop-color="#ff7a30" stop-opacity="0.200"/></linearGradient>
<linearGradient id="g42" x1="0" y1="532" x2="0" y2="800" gradientUnits="userSpaceOnUse"><stop offset="0.000" stop-color="#ff4a14" stop-opacity="0.000"/><stop offset="0.485" stop-color="#ff5a1c" stop-opacity="0.336"/><stop offset="0.701" stop-color="#ff8a38" stop-opacity="0.420"/><stop offset="1.000" stop-color="#ff8a38" stop-opacity="0.420"/></linearGradient>
<linearGradient id="g43" x1="0" y1="442" x2="0" y2="800" gradientUnits="userSpaceOnUse"><stop offset="0.000" stop-color="#ff4a14" stop-opacity="0.000"/><stop offset="0.363" stop-color="#ff4a14" stop-opacity="0.228"/><stop offset="0.553" stop-color="#ff5a1c" stop-opacity="0.304"/><stop offset="0.777" stop-color="#ff8a38" stop-opacity="0.380"/><stop offset="1.000" stop-color="#ff8a38" stop-opacity="0.380"/></linearGradient>
<linearGradient id="g44" x1="0" y1="445" x2="0" y2="800" gradientUnits="userSpaceOnUse"><stop offset="0.000" stop-color="#ff4a14" stop-opacity="0.000"/><stop offset="0.366" stop-color="#ff4a14" stop-opacity="0.180"/><stop offset="0.549" stop-color="#ff5a1c" stop-opacity="0.240"/><stop offset="0.775" stop-color="#ff8a38" stop-opacity="0.300"/><stop offset="1.000" stop-color="#ff8a38" stop-opacity="0.300"/></linearGradient>
<linearGradient id="g45" x1="0" y1="560" x2="0" y2="800" gradientUnits="userSpaceOnUse"><stop offset="0.000" stop-color="#ff4a14" stop-opacity="0.000"/><stop offset="0.542" stop-color="#ff5a1c" stop-opacity="0.224"/><stop offset="0.667" stop-color="#ff8a38" stop-opacity="0.280"/><stop offset="1.000" stop-color="#ff8a38" stop-opacity="0.280"/></linearGradient></defs>
<rect width="1280" height="800" fill="url(#base)"/>
<ellipse cx="590" cy="740" rx="400" ry="290" fill="url(#cglow)"/>
<ellipse cx="1000" cy="780" rx="200" ry="200" fill="url(#cglow)" opacity="0.6"/>
<ellipse cx="250" cy="790" rx="170" ry="150" fill="url(#cglow)" opacity="0.5"/>
<path d="M0.0 530.0C6.7 517.5 26.7 480.0 40.0 455.0C53.3 430.0 68.5 400.8 80.0 380.0C91.5 359.2 96.3 350.3 109.0 330.0C121.7 309.7 140.8 278.8 156.0 258.0C171.2 237.2 183.3 221.7 200.0 205.0C216.7 188.3 239.3 170.8 256.0 158.0C272.7 145.2 288.0 134.8 300.0 128.0C312.0 121.2 323.3 118.8 328.0 117.0L324.0 250.0C325.2 280.0 328.3 371.7 331.0 430.0C333.7 488.3 340.2 542.3 340.0 600.0C339.8 657.7 331.7 746.7 330.0 776.0L0.0 776.0Z" fill="#ff3c00" fill-opacity="0.065"/>
<path d="M88.0 470.0C87.5 480.0 86.0 511.7 85.0 530.0C84.0 548.3 85.3 559.2 82.0 580.0C78.7 600.8 70.3 632.2 65.0 655.0C59.7 677.8 54.2 696.8 50.0 717.0C45.8 737.2 41.7 766.2 40.0 776.0L92.0 776.0L92.0 776.0C93.3 772.5 95.3 766.8 100.0 755.0C104.7 743.2 112.5 723.8 120.0 705.0C127.5 686.2 138.3 658.7 145.0 642.0C151.7 625.3 156.7 615.3 160.0 605.0C163.3 594.7 162.5 592.5 165.0 580.0C167.5 567.5 172.5 546.7 175.0 530.0C177.5 513.3 179.2 488.3 180.0 480.0Z" fill="url(#g1)"/>
<path d="M88.0 470.0C87.5 480.0 86.0 511.7 85.0 530.0C84.0 548.3 85.3 559.2 82.0 580.0C78.7 600.8 70.3 632.2 65.0 655.0C59.7 677.8 54.2 696.8 50.0 717.0C45.8 737.2 41.7 766.2 40.0 776.0L0.0 776.0C0.0 725.0 0.0 521.0 0.0 470.0Z" fill="url(#g2)"/>
<path d="M148.0 250.0C148.7 258.3 149.2 278.3 152.0 300.0C154.8 321.7 160.5 356.3 165.0 380.0C169.5 403.7 176.5 425.3 179.0 442.0C181.5 458.7 180.7 465.3 180.0 480.0C179.3 494.7 177.5 513.3 175.0 530.0C172.5 546.7 167.5 567.5 165.0 580.0C162.5 592.5 163.3 594.7 160.0 605.0C156.7 615.3 151.7 625.3 145.0 642.0C138.3 658.7 127.5 686.2 120.0 705.0C112.5 723.8 104.7 743.2 100.0 755.0C95.3 766.8 93.3 772.5 92.0 776.0L320.0 776.0C317.5 769.2 310.8 751.0 305.0 735.0C299.2 719.0 292.5 702.5 285.0 680.0C277.5 657.5 265.8 630.0 260.0 600.0C254.2 570.0 253.3 533.3 250.0 500.0C246.7 466.7 242.0 428.3 240.0 400.0C238.0 371.7 238.8 355.0 238.0 330.0C237.2 305.0 235.5 263.3 235.0 250.0Z" fill="url(#g3)"/>
<g clip-path="url(#k1)"><g clip-path="url(#c1)"><path d="M148.0 250.0C148.7 258.3 149.2 278.3 152.0 300.0C154.8 321.7 160.5 356.3 165.0 380.0C169.5 403.7 176.5 425.3 179.0 442.0C181.5 458.7 180.7 465.3 180.0 480.0C179.3 494.7 177.5 513.3 175.0 530.0C172.5 546.7 167.5 567.5 165.0 580.0C162.5 592.5 163.3 594.7 160.0 605.0C156.7 615.3 151.7 625.3 145.0 642.0C138.3 658.7 127.5 686.2 120.0 705.0C112.5 723.8 104.7 743.2 100.0 755.0C95.3 766.8 93.3 772.5 92.0 776.0" fill="none" stroke="url(#g4)" stroke-width="80.0" filter="url(#f1)"/></g></g>
<path d="M385.0 240.0C383.8 253.3 380.2 296.7 378.0 320.0C375.8 343.3 373.3 366.7 372.0 380.0C370.7 393.3 370.8 384.2 370.0 400.0C369.2 415.8 370.3 450.0 367.0 475.0C363.7 500.0 357.8 527.5 350.0 550.0C342.2 572.5 330.0 592.5 320.0 610.0C310.0 627.5 300.0 640.0 290.0 655.0C280.0 670.0 270.3 685.5 260.0 700.0C249.7 714.5 238.0 729.3 228.0 742.0C218.0 754.7 204.7 770.3 200.0 776.0L457.0 776.0C455.3 764.2 449.8 725.2 447.0 705.0C444.2 684.8 441.7 675.8 440.0 655.0C438.3 634.2 436.7 607.2 437.0 580.0C437.3 552.8 439.8 515.0 442.0 492.0C444.2 469.0 447.0 460.7 450.0 442.0C453.0 423.3 456.7 403.7 460.0 380.0C463.3 356.3 467.5 321.7 470.0 300.0C472.5 278.3 474.2 258.3 475.0 250.0Z" fill="url(#g5)"/>
<g clip-path="url(#k2)"><g clip-path="url(#c2)"><path d="M475.0 250.0C474.2 258.3 472.5 278.3 470.0 300.0C467.5 321.7 463.3 356.3 460.0 380.0C456.7 403.7 453.0 423.3 450.0 442.0C447.0 460.7 444.2 469.0 442.0 492.0C439.8 515.0 437.3 552.8 437.0 580.0C436.7 607.2 438.3 634.2 440.0 655.0C441.7 675.8 444.2 684.8 447.0 705.0C449.8 725.2 455.3 764.2 457.0 776.0" fill="none" stroke="url(#g6)" stroke-width="90.0" filter="url(#f2)"/></g></g>
<g clip-path="url(#k3)"><g clip-path="url(#c3)"><path d="M385.0 240.0C383.8 253.3 380.2 296.7 378.0 320.0C375.8 343.3 373.3 366.7 372.0 380.0C370.7 393.3 370.8 384.2 370.0 400.0C369.2 415.8 370.3 450.0 367.0 475.0C363.7 500.0 357.8 527.5 350.0 550.0C342.2 572.5 330.0 592.5 320.0 610.0C310.0 627.5 300.0 640.0 290.0 655.0C280.0 670.0 270.3 685.5 260.0 700.0C249.7 714.5 238.0 729.3 228.0 742.0C218.0 754.7 204.7 770.3 200.0 776.0" fill="none" stroke="url(#g7)" stroke-width="40.0" filter="url(#f3)"/></g></g>
<path d="M542.0 640.0C538.3 642.5 527.8 648.8 520.0 655.0C512.2 661.2 503.3 668.7 495.0 677.0C486.7 685.3 477.2 694.5 470.0 705.0C462.8 715.5 455.8 728.2 452.0 740.0C448.2 751.8 447.8 770.0 447.0 776.0L550.0 776.0C549.2 763.3 546.3 722.7 545.0 700.0C543.7 677.3 542.5 650.0 542.0 640.0Z" fill="#300c00" fill-opacity="0.170"/>
<path d="M300 705L285 776L330 776L320 750Z" fill="#300c00" fill-opacity="0.280"/>
<path d="M612.0 299.0C617.3 305.2 635.0 322.0 644.0 336.0C653.0 350.0 660.5 368.2 666.0 383.0C671.5 397.8 675.2 413.8 677.0 425.0C678.8 436.2 677.5 442.5 677.0 450.0C676.5 457.5 675.5 462.5 674.0 470.0C672.5 477.5 670.5 486.2 668.0 495.0C665.5 503.8 662.2 515.2 659.0 523.0C655.8 530.8 652.5 534.2 649.0 542.0C645.5 549.8 642.8 558.7 638.0 570.0C633.2 581.3 625.7 595.0 620.0 610.0C614.3 625.0 608.0 641.7 604.0 660.0C600.0 678.3 598.0 700.7 596.0 720.0C594.0 739.3 592.7 766.7 592.0 776.0L543.0 776.0C543.0 763.3 542.5 722.7 543.0 700.0C543.5 677.3 544.8 660.0 546.0 640.0C547.2 620.0 548.3 596.3 550.0 580.0C551.7 563.7 553.8 554.7 556.0 542.0C558.2 529.3 560.5 516.5 563.0 504.0C565.5 491.5 567.3 484.3 571.0 467.0C574.7 449.7 580.2 419.2 585.0 400.0C589.8 380.8 595.5 368.8 600.0 352.0C604.5 335.2 610.0 307.8 612.0 299.0Z" fill="url(#g8)"/>
<g clip-path="url(#k4)"><g clip-path="url(#c4)"><path d="M612.0 299.0C617.3 305.2 635.0 322.0 644.0 336.0C653.0 350.0 660.5 368.2 666.0 383.0C671.5 397.8 675.2 413.8 677.0 425.0C678.8 436.2 677.5 442.5 677.0 450.0C676.5 457.5 675.5 462.5 674.0 470.0C672.5 477.5 670.5 486.2 668.0 495.0C665.5 503.8 662.2 515.2 659.0 523.0C655.8 530.8 652.5 534.2 649.0 542.0C645.5 549.8 642.8 558.7 638.0 570.0C633.2 581.3 625.7 595.0 620.0 610.0C614.3 625.0 608.0 641.7 604.0 660.0C600.0 678.3 598.0 700.7 596.0 720.0C594.0 739.3 592.7 766.7 592.0 776.0" fill="none" stroke="url(#g9)" stroke-width="50.0" filter="url(#f4)"/></g></g>
<g clip-path="url(#k5)"><g clip-path="url(#c5)"><path d="M612.0 299.0C610.0 307.8 604.5 335.2 600.0 352.0C595.5 368.8 589.8 380.8 585.0 400.0C580.2 419.2 574.7 449.7 571.0 467.0C567.3 484.3 565.5 491.5 563.0 504.0C560.5 516.5 558.2 529.3 556.0 542.0C553.8 554.7 551.7 563.7 550.0 580.0C548.3 596.3 547.2 620.0 546.0 640.0C544.8 660.0 543.5 677.3 543.0 700.0C542.5 722.7 543.0 763.3 543.0 776.0" fill="none" stroke="url(#g10)" stroke-width="30.0" filter="url(#f5)"/></g></g>
<path d="M714.0 420.0C712.8 423.7 711.2 431.0 707.0 442.0C702.8 453.0 693.5 474.0 689.0 486.0C684.5 498.0 682.2 501.7 680.0 514.0C677.8 526.3 676.0 546.0 676.0 560.0C676.0 574.0 677.8 585.5 680.0 598.0C682.2 610.5 685.7 624.2 689.0 635.0C692.3 645.8 696.2 650.5 700.0 663.0C703.8 675.5 708.0 696.3 712.0 710.0C716.0 723.7 720.7 734.0 724.0 745.0C727.3 756.0 730.7 770.8 732.0 776.0L859.0 776.0C858.3 764.2 857.3 727.3 855.0 705.0C852.7 682.7 847.5 657.0 845.0 642.0C842.5 627.0 843.3 625.8 840.0 615.0C836.7 604.2 831.3 591.7 825.0 577.0C818.7 562.3 808.7 543.7 802.0 527.0C795.3 510.3 788.7 491.2 785.0 477.0C781.3 462.8 781.2 451.5 780.0 442.0C778.8 432.5 778.3 423.7 778.0 420.0Z" fill="url(#g11)"/>
<g clip-path="url(#k6)"><g clip-path="url(#c6)"><path d="M778.0 420.0C778.3 423.7 778.8 432.5 780.0 442.0C781.2 451.5 781.3 462.8 785.0 477.0C788.7 491.2 795.3 510.3 802.0 527.0C808.7 543.7 818.7 562.3 825.0 577.0C831.3 591.7 836.7 604.2 840.0 615.0C843.3 625.8 842.5 627.0 845.0 642.0C847.5 657.0 852.7 682.7 855.0 705.0C857.3 727.3 858.3 764.2 859.0 776.0" fill="none" stroke="url(#g12)" stroke-width="80.0" filter="url(#f6)"/></g></g>
<path d="M778.0 420.0C778.3 423.7 778.8 432.5 780.0 442.0C781.2 451.5 781.3 462.8 785.0 477.0C788.7 491.2 795.3 510.3 802.0 527.0C808.7 543.7 818.7 562.3 825.0 577.0C831.3 591.7 836.7 604.2 840.0 615.0C843.3 625.8 844.2 637.5 845.0 642.0L846.0 645.0C845.3 639.2 844.2 624.2 842.0 610.0C839.8 595.8 836.3 578.3 833.0 560.0C829.7 541.7 825.0 520.0 822.0 500.0C819.0 480.0 816.5 453.3 815.0 440.0C813.5 426.7 813.3 423.3 813.0 420.0Z" fill="url(#g13)"/>
<g clip-path="url(#k7)"><g clip-path="url(#c7)"><path d="M714.0 420.0C712.8 423.7 711.2 431.0 707.0 442.0C702.8 453.0 693.5 474.0 689.0 486.0C684.5 498.0 682.2 501.7 680.0 514.0C677.8 526.3 676.0 546.0 676.0 560.0C676.0 574.0 677.8 585.5 680.0 598.0C682.2 610.5 685.7 624.2 689.0 635.0C692.3 645.8 696.2 650.5 700.0 663.0C703.8 675.5 708.0 696.3 712.0 710.0C716.0 723.7 720.7 734.0 724.0 745.0C727.3 756.0 730.7 770.8 732.0 776.0" fill="none" stroke="url(#g14)" stroke-width="30.0" filter="url(#f7)"/></g></g>
<path d="M778.0 420.0C778.3 423.7 778.8 432.5 780.0 442.0C781.2 451.5 781.3 462.8 785.0 477.0C788.7 491.2 795.3 510.3 802.0 527.0C808.7 543.7 818.7 562.3 825.0 577.0C831.3 591.7 836.7 604.2 840.0 615.0C843.3 625.8 842.5 627.0 845.0 642.0C847.5 657.0 852.7 682.7 855.0 705.0C857.3 727.3 858.3 764.2 859.0 776.0L950.0 776.0C949.2 753.3 947.2 673.2 945.0 640.0C942.8 606.8 940.0 597.8 937.0 577.0C934.0 556.2 930.3 537.5 927.0 515.0C923.7 492.5 919.0 457.8 917.0 442.0C915.0 426.2 915.3 423.7 915.0 420.0Z" fill="#200600" fill-opacity="0.050"/>
<path d="M915.0 420.0C915.3 423.7 915.0 426.2 917.0 442.0C919.0 457.8 923.7 492.5 927.0 515.0C930.3 537.5 934.0 556.2 937.0 577.0C940.0 597.8 942.8 606.8 945.0 640.0C947.2 673.2 949.2 753.3 950.0 776.0L1025.0 776.0C1023.7 770.3 1020.0 753.8 1017.0 742.0C1014.0 730.2 1009.0 719.5 1007.0 705.0C1005.0 690.5 1005.3 665.8 1005.0 655.0C1004.7 644.2 1003.8 648.8 1005.0 640.0C1006.2 631.2 1007.8 614.5 1012.0 602.0C1016.2 589.5 1022.8 577.5 1030.0 565.0C1037.2 552.5 1045.8 539.5 1055.0 527.0C1064.2 514.5 1075.0 501.0 1085.0 490.0C1095.0 479.0 1110.0 465.8 1115.0 461.0L1130.0 442.0Z" fill="url(#g15)"/>
<path d="M1115.0 461.0C1110.0 465.8 1095.0 479.0 1085.0 490.0C1075.0 501.0 1064.2 514.5 1055.0 527.0C1045.8 539.5 1037.2 552.5 1030.0 565.0C1022.8 577.5 1016.2 589.5 1012.0 602.0C1007.8 614.5 1006.2 631.2 1005.0 640.0C1003.8 648.8 1004.7 644.2 1005.0 655.0C1005.3 665.8 1005.0 690.5 1007.0 705.0C1009.0 719.5 1014.0 730.2 1017.0 742.0C1020.0 753.8 1023.7 770.3 1025.0 776.0L1117.0 776.0L1118.0 776.0C1117.8 746.7 1117.5 652.5 1117.0 600.0C1116.5 547.5 1115.3 484.2 1115.0 461.0Z" fill="url(#g16)"/>
<g clip-path="url(#k8)"><g clip-path="url(#c8)"><path d="M1115.0 461.0C1115.3 484.2 1116.5 547.5 1117.0 600.0C1117.5 652.5 1117.8 746.7 1118.0 776.0" fill="none" stroke="url(#g17)" stroke-width="80.0" filter="url(#f8)"/></g></g>
<g clip-path="url(#k9)"><g clip-path="url(#c9)"><path d="M1115.0 461.0C1110.0 465.8 1095.0 479.0 1085.0 490.0C1075.0 501.0 1064.2 514.5 1055.0 527.0C1045.8 539.5 1037.2 552.5 1030.0 565.0C1022.8 577.5 1016.2 589.5 1012.0 602.0C1007.8 614.5 1006.2 631.2 1005.0 640.0C1003.8 648.8 1004.7 644.2 1005.0 655.0C1005.3 665.8 1005.0 690.5 1007.0 705.0C1009.0 719.5 1014.0 730.2 1017.0 742.0C1020.0 753.8 1023.7 770.3 1025.0 776.0" fill="none" stroke="url(#g18)" stroke-width="50.0" filter="url(#f9)"/></g></g>
<path d="M1115.0 461.0C1122.5 470.0 1146.3 497.7 1160.0 515.0C1173.7 532.3 1184.5 548.3 1197.0 565.0C1209.5 581.7 1225.3 602.5 1235.0 615.0C1244.7 627.5 1247.5 631.7 1255.0 640.0C1262.5 648.3 1275.8 660.8 1280.0 665.0L1280.0 776.0C1252.8 776.0 1144.2 776.0 1117.0 776.0L1118.0 776.0C1117.8 746.7 1117.5 652.5 1117.0 600.0C1116.5 547.5 1115.3 484.2 1115.0 461.0Z" fill="url(#g19)"/>
<path d="M1115 461L1118 763L1280 610L1280 665L1255 640L1235 615L1197 565L1160 515Z" fill="#ff5a0c" fill-opacity="0.070"/>
<path d="M1115.0 461.0C1122.5 470.0 1146.3 497.7 1160.0 515.0C1173.7 532.3 1184.5 548.3 1197.0 565.0C1209.5 581.7 1225.3 602.5 1235.0 615.0C1244.7 627.5 1247.5 631.7 1255.0 640.0C1262.5 648.3 1275.8 660.8 1280.0 665.0L1280.0 442.0C1255.0 442.0 1155.0 442.0 1130.0 442.0Z" fill="url(#g20)"/>
<path d="M1115.0 461.0C1122.5 470.0 1146.3 497.7 1160.0 515.0C1173.7 532.3 1184.5 548.3 1197.0 565.0C1209.5 581.7 1225.3 602.5 1235.0 615.0C1244.7 627.5 1247.5 631.7 1255.0 640.0C1262.5 648.3 1275.8 660.8 1280.0 665.0L1280.0 442.0C1255.0 442.0 1155.0 442.0 1130.0 442.0Z" fill="url(#g21)"/>
<path d="M1100 442L1130 442L1115 461Z" fill="#ff5a0c" fill-opacity="0.120"/>
<ellipse cx="425" cy="760" rx="60" ry="110" fill="url(#glow)" opacity="0.50"/>
<ellipse cx="760" cy="775" rx="140" ry="60" fill="url(#glow)" opacity="0.75"/>
<ellipse cx="660" cy="765" rx="60" ry="45" fill="url(#glow)" opacity="0.50"/>
<ellipse cx="1085" cy="770" rx="45" ry="80" fill="url(#glow)" opacity="0.40"/>
<ellipse cx="985" cy="775" rx="50" ry="50" fill="url(#glow)" opacity="0.45"/>
<ellipse cx="230" cy="775" rx="130" ry="36" fill="url(#glow)" opacity="0.40"/>
<ellipse cx="60" cy="775" rx="60" ry="25" fill="url(#glow)" opacity="0.30"/>
<ellipse cx="590" cy="800" rx="620" ry="150" fill="url(#bstrip)"/>
<path d="M0 772.5L1280 772.5" stroke="#ffb070" stroke-opacity="0.07" stroke-width="1.5"/>
<rect width="1280" height="800" fill="url(#dk)"/>
<rect width="1280" height="800" fill="url(#dkl)"/>
<path d="M415.0 380.0C407.2 396.7 383.8 447.5 368.0 480.0C352.2 512.5 339.7 540.0 320.0 575.0C300.3 610.0 270.0 656.5 250.0 690.0C230.0 723.5 208.3 761.7 200.0 776.0" fill="none" stroke="url(#g22)" stroke-width="1.3"/>
<path d="M475.0 180.0C471.8 195.7 469.5 232.3 456.0 274.0C442.5 315.7 413.3 382.3 394.0 430.0C374.7 477.7 355.7 523.3 340.0 560.0C324.3 596.7 313.0 614.0 300.0 650.0C287.0 686.0 268.3 755.0 262.0 776.0" fill="none" stroke="url(#g23)" stroke-width="1.1"/>
<path d="M322.0 117.0C322.0 139.2 320.5 197.8 322.0 250.0C323.5 302.2 327.2 371.7 331.0 430.0C334.8 488.3 341.5 542.3 345.0 600.0C348.5 657.7 350.8 746.7 352.0 776.0" fill="none" stroke="url(#g24)" stroke-width="1.3"/>
<path d="M0.0 700.0C6.3 708.7 28.0 739.3 38.0 752.0C48.0 764.7 56.3 772.0 60.0 776.0" fill="none" stroke="#ff7a30" stroke-opacity="0.45" stroke-width="1.0"/>
<path d="M20.0 776.0C30.0 763.3 58.3 722.7 80.0 700.0C101.7 677.3 126.7 663.3 150.0 640.0C173.3 616.7 200.0 586.7 220.0 560.0C240.0 533.3 256.7 506.7 270.0 480.0C283.3 453.3 295.0 413.3 300.0 400.0" fill="none" stroke="url(#g25)" stroke-width="1.0"/>
<path d="M140.0 400.0C136.7 420.0 127.5 490.0 120.0 520.0C112.5 550.0 105.0 553.3 95.0 580.0C85.0 606.7 70.8 647.3 60.0 680.0C49.2 712.7 35.0 760.0 30.0 776.0" fill="none" stroke="url(#g26)" stroke-width="1.5"/>
<path d="M0.0 620.0C5.0 610.0 20.0 585.0 30.0 560.0C40.0 535.0 51.7 496.7 60.0 470.0C68.3 443.3 76.7 411.7 80.0 400.0" fill="none" stroke="url(#g27)" stroke-width="1.0"/>
<path d="M205.0 400.0C208.3 420.0 220.5 486.7 225.0 520.0C229.5 553.3 231.5 570.0 232.0 600.0C232.5 630.0 230.8 670.7 228.0 700.0C225.2 729.3 217.2 763.3 215.0 776.0" fill="none" stroke="url(#g28)" stroke-width="1.0"/>
<path d="M520.0 400.0C521.7 416.7 526.7 470.0 530.0 500.0C533.3 530.0 535.8 555.0 540.0 580.0C544.2 605.0 552.0 617.3 555.0 650.0C558.0 682.7 557.5 755.0 558.0 776.0" fill="none" stroke="url(#g29)" stroke-width="1.0"/>
<path d="M445.0 400.0C446.7 416.7 452.2 470.0 455.0 500.0C457.8 530.0 459.5 550.0 462.0 580.0C464.5 610.0 467.3 647.3 470.0 680.0C472.7 712.7 476.7 760.0 478.0 776.0" fill="none" stroke="url(#g30)" stroke-width="1.0"/>
<path d="M380.0 776.0C380.8 763.3 381.7 726.0 385.0 700.0C388.3 674.0 397.2 640.0 400.0 620.0C402.8 600.0 402.3 603.3 402.0 580.0C401.7 556.7 400.0 510.0 398.0 480.0C396.0 450.0 391.3 413.3 390.0 400.0" fill="none" stroke="url(#g31)" stroke-width="1.0"/>
<path d="M330.0 776.0C333.3 760.0 342.5 709.3 350.0 680.0C357.5 650.7 368.3 623.3 375.0 600.0C381.7 576.7 384.2 561.7 390.0 540.0C395.8 518.3 403.3 493.3 410.0 470.0C416.7 446.7 426.7 411.7 430.0 400.0" fill="none" stroke="url(#g32)" stroke-width="1.0"/>
<path d="M590.0 776.0C591.7 763.3 595.0 722.7 600.0 700.0C605.0 677.3 615.3 656.7 620.0 640.0C624.7 623.3 624.7 620.0 628.0 600.0C631.3 580.0 637.2 546.7 640.0 520.0C642.8 493.3 644.2 453.3 645.0 440.0" fill="none" stroke="url(#g33)" stroke-width="1.0"/>
<path d="M628.0 776.0C628.7 763.3 630.0 722.7 632.0 700.0C634.0 677.3 636.2 663.3 640.0 640.0C643.8 616.7 651.7 586.7 655.0 560.0C658.3 533.3 659.2 493.3 660.0 480.0" fill="none" stroke="url(#g34)" stroke-width="1.0"/>
<path d="M672.0 776.0C671.3 763.3 670.8 722.7 668.0 700.0C665.2 677.3 658.8 660.0 655.0 640.0C651.2 620.0 649.2 603.3 645.0 580.0C640.8 556.7 634.2 523.3 630.0 500.0C625.8 476.7 621.7 450.0 620.0 440.0" fill="none" stroke="url(#g35)" stroke-width="1.0"/>
<path d="M676.0 776.0C677.0 763.3 678.8 722.7 682.0 700.0C685.2 677.3 692.0 660.0 695.0 640.0C698.0 620.0 698.8 603.3 700.0 580.0C701.2 556.7 702.0 522.5 702.0 500.0C702.0 477.5 700.3 454.2 700.0 445.0" fill="none" stroke="url(#g36)" stroke-width="1.0"/>
<path d="M745.0 776.0C746.2 763.3 750.5 722.7 752.0 700.0C753.5 677.3 755.2 663.3 754.0 640.0C752.8 616.7 747.0 583.3 745.0 560.0C743.0 536.7 743.7 519.2 742.0 500.0C740.3 480.8 736.2 454.2 735.0 445.0" fill="none" stroke="url(#g37)" stroke-width="1.0"/>
<path d="M780.0 776.0C779.7 760.0 778.7 709.3 778.0 680.0C777.3 650.7 776.7 620.0 776.0 600.0C775.3 580.0 775.0 576.7 774.0 560.0C773.0 543.3 771.5 519.2 770.0 500.0C768.5 480.8 765.8 454.2 765.0 445.0" fill="none" stroke="url(#g38)" stroke-width="1.0"/>
<path d="M815.0 776.0C815.5 763.3 818.5 722.7 818.0 700.0C817.5 677.3 815.0 660.0 812.0 640.0C809.0 620.0 806.2 603.3 800.0 580.0C793.8 556.7 782.5 522.5 775.0 500.0C767.5 477.5 758.3 454.2 755.0 445.0" fill="none" stroke="url(#g39)" stroke-width="1.2"/>
<path d="M700.0 668.0C710.0 669.3 740.0 670.7 760.0 676.0C780.0 681.3 801.7 691.0 820.0 700.0C838.3 709.0 853.3 717.3 870.0 730.0C886.7 742.7 911.7 768.3 920.0 776.0" fill="none" stroke="#ffa050" stroke-opacity="0.28" stroke-width="1.0"/>
<path d="M885.0 776.0C884.2 763.3 882.5 722.7 880.0 700.0C877.5 677.3 873.7 663.3 870.0 640.0C866.3 616.7 861.0 592.5 858.0 560.0C855.0 527.5 853.0 464.2 852.0 445.0" fill="none" stroke="url(#g40)" stroke-width="1.0"/>
<path d="M905.0 776.0C904.2 763.3 902.2 726.0 900.0 700.0C897.8 674.0 895.3 650.0 892.0 620.0C888.7 590.0 882.8 549.2 880.0 520.0C877.2 490.8 875.8 457.5 875.0 445.0" fill="none" stroke="url(#g41)" stroke-width="1.0"/>
<path d="M930.0 445.0C935.0 450.8 950.0 467.5 960.0 480.0C970.0 492.5 985.0 513.3 990.0 520.0" fill="none" stroke="#ff5a20" stroke-opacity="0.45" stroke-width="1.3"/>
<path d="M960.0 532.0C966.7 541.7 987.5 572.0 1000.0 590.0C1012.5 608.0 1025.0 621.7 1035.0 640.0C1045.0 658.3 1053.5 677.3 1060.0 700.0C1066.5 722.7 1071.7 763.3 1074.0 776.0" fill="none" stroke="url(#g42)" stroke-width="1.0"/>
<path d="M1020.0 580.0C1028.3 583.3 1055.0 591.7 1070.0 600.0C1085.0 608.3 1098.3 614.7 1110.0 630.0C1121.7 645.3 1132.2 667.7 1140.0 692.0C1147.8 716.3 1154.2 762.0 1157.0 776.0" fill="none" stroke="#ff8a38" stroke-opacity="0.28" stroke-width="1.0"/>
<path d="M1185.0 442.0C1189.2 453.3 1203.8 491.7 1210.0 510.0C1216.2 528.3 1217.0 530.3 1222.0 552.0C1227.0 573.7 1233.3 612.0 1240.0 640.0C1246.7 668.0 1256.7 697.3 1262.0 720.0C1267.3 742.7 1270.3 766.7 1272.0 776.0" fill="none" stroke="url(#g43)" stroke-width="1.0"/>
<path d="M1206.0 776.0C1207.5 763.3 1212.3 722.7 1215.0 700.0C1217.7 677.3 1221.2 658.3 1222.0 640.0C1222.8 621.7 1221.0 613.3 1220.0 590.0C1219.0 566.7 1217.7 524.2 1216.0 500.0C1214.3 475.8 1211.0 454.2 1210.0 445.0" fill="none" stroke="url(#g44)" stroke-width="1.0"/>
<path d="M1250.0 776.0C1252.0 763.3 1258.7 722.7 1262.0 700.0C1265.3 677.3 1267.8 663.3 1270.0 640.0C1272.2 616.7 1274.2 573.3 1275.0 560.0" fill="none" stroke="url(#g45)" stroke-width="1.0"/>
<path d="M962.0 600.0C962.7 613.3 966.0 650.7 966.0 680.0C966.0 709.3 962.7 760.0 962.0 776.0" fill="none" stroke="#ffa040" stroke-opacity="0.42" stroke-width="1.0"/>
<path d="M872.0 660.0C873.3 670.0 878.0 700.7 880.0 720.0C882.0 739.3 883.3 766.7 884.0 776.0" fill="none" stroke="#ff8a38" stroke-opacity="0.36" stroke-width="1.0"/>
<g filter="url(#b1)">
<circle cx="435.0" cy="499.0" r="12.5" fill="none" stroke="#ff4a18" stroke-opacity="0.40" stroke-width="3.5"/>
<circle cx="167.0" cy="602.0" r="12.0" fill="none" stroke="#ff5a20" stroke-opacity="0.30" stroke-width="4.0"/>
<circle cx="174.0" cy="646.0" r="11.0" fill="none" stroke="#ff5a20" stroke-opacity="0.28" stroke-width="4.0"/>
<circle cx="253.0" cy="611.0" r="11.0" fill="none" stroke="#e83a10" stroke-opacity="0.55" stroke-width="4.0"/>
<circle cx="30.0" cy="705.0" r="14.5" fill="none" stroke="#3a0a00" stroke-opacity="0.38" stroke-width="4.0"/>
<circle cx="114.0" cy="711.0" r="9.0" fill="none" stroke="#300800" stroke-opacity="0.55" stroke-width="3.0"/>
<circle cx="82.0" cy="686.0" r="9.0" fill="none" stroke="#ff5a20" stroke-opacity="0.20" stroke-width="3.5"/>
<circle cx="64.0" cy="665.0" r="11.0" fill="none" stroke="#ff5a20" stroke-opacity="0.14" stroke-width="3.5"/>
<circle cx="288.0" cy="729.0" r="13.0" fill="none" stroke="#ff7a30" stroke-opacity="0.40" stroke-width="4.5"/>
<circle cx="220.0" cy="729.0" r="12.0" fill="none" stroke="#ff6a28" stroke-opacity="0.12" stroke-width="4.5"/>
<circle cx="497.0" cy="658.0" r="15.5" fill="none" stroke="#ff7a30" stroke-opacity="0.50" stroke-width="5.0"/>
<circle cx="342.0" cy="748.0" r="15.0" fill="none" stroke="#c02408" stroke-opacity="0.60" stroke-width="5.0"/>
<circle cx="472.0" cy="760.0" r="7.0" fill="none" stroke="#ffa060" stroke-opacity="0.50" stroke-width="2.2"/>
<circle cx="506.0" cy="755.0" r="10.0" fill="none" stroke="#a01c0c" stroke-opacity="0.50" stroke-width="3.5"/>
<circle cx="397.0" cy="752.0" r="10.0" fill="none" stroke="#e04020" stroke-opacity="0.22" stroke-width="3.5"/>
<circle cx="752.0" cy="500.0" r="12.0" fill="none" stroke="#ff5a20" stroke-opacity="0.32" stroke-width="4.0"/>
<circle cx="735.0" cy="606.0" r="11.5" fill="none" stroke="#ff6a28" stroke-opacity="0.32" stroke-width="4.0"/>
<circle cx="881.0" cy="582.0" r="10.0" fill="none" stroke="#ff5a20" stroke-opacity="0.30" stroke-width="4.0"/>
<circle cx="644.0" cy="660.0" r="9.0" fill="none" stroke="#ff7a30" stroke-opacity="0.50" stroke-width="3.0"/>
<circle cx="887.0" cy="652.0" r="11.5" fill="none" stroke="#ff6a28" stroke-opacity="0.60" stroke-width="4.0"/>
<circle cx="877.0" cy="723.0" r="15.0" fill="none" stroke="#ff6a28" stroke-opacity="0.50" stroke-width="5.0"/>
<circle cx="725.0" cy="755.0" r="7.5" fill="none" stroke="#ffb080" stroke-opacity="0.60" stroke-width="2.2"/>
<circle cx="742.0" cy="692.0" r="15.0" fill="none" stroke="#ff6a28" stroke-opacity="0.10" stroke-width="4.5"/>
<circle cx="1148.0" cy="585.0" r="15.5" fill="none" stroke="#f04a18" stroke-opacity="0.55" stroke-width="5.5"/>
<circle cx="1020.0" cy="565.0" r="11.0" fill="none" stroke="#ff5a20" stroke-opacity="0.26" stroke-width="4.0"/>
<circle cx="1271.0" cy="595.0" r="13.5" fill="none" stroke="#ff6a28" stroke-opacity="0.30" stroke-width="4.5"/>
<circle cx="1168.0" cy="642.0" r="10.0" fill="none" stroke="#2a0600" stroke-opacity="0.55" stroke-width="3.0"/>
<circle cx="1087.0" cy="692.0" r="9.0" fill="none" stroke="#ff7a30" stroke-opacity="0.60" stroke-width="3.0"/>
<circle cx="1222.0" cy="700.0" r="14.0" fill="none" stroke="#ff6a28" stroke-opacity="0.24" stroke-width="5.0"/>
<circle cx="1019.0" cy="757.0" r="13.0" fill="none" stroke="#ff6a28" stroke-opacity="0.12" stroke-width="4.5"/>
<circle cx="992.0" cy="778.0" r="7.0" fill="none" stroke="#701000" stroke-opacity="0.50" stroke-width="3.0"/>
</g>
<circle cx="81" cy="732" r="13" fill="#300800" fill-opacity="0.18" filter="url(#b3)"/>
<circle cx="1180" cy="709" r="12" fill="#300800" fill-opacity="0.20" filter="url(#b3)"/>
<circle cx="930" cy="692" r="13" fill="#300800" fill-opacity="0.12" filter="url(#b3)"/>
<circle cx="837" cy="742" r="7.2" fill="url(#spot)" opacity="1.00"/>
<circle cx="654" cy="759" r="6.3" fill="url(#spot)" opacity="1.00"/>
<circle cx="575" cy="685" r="6.3" fill="url(#spot)" opacity="0.60"/>
<circle cx="472" cy="731" r="5.4" fill="url(#spot)" opacity="1.00"/>
<circle cx="232" cy="672" r="4.5" fill="url(#spot)" opacity="0.60"/>
<circle cx="38" cy="752" r="5.4" fill="url(#spot)" opacity="1.00"/>
<circle cx="350" cy="670" r="4.5" fill="url(#spot)" opacity="0.60"/>
<circle cx="1258" cy="726" r="5.4" fill="url(#spot)" opacity="1.00"/>
<circle cx="1159" cy="674" r="4.5" fill="url(#spot)" opacity="0.60"/>
<circle cx="600" cy="650" r="3.6" fill="url(#spot)" opacity="0.60"/>
<circle cx="555" cy="610" r="3.6" fill="url(#spot)" opacity="0.60"/>
<circle cx="1164" cy="725" r="3.6" fill="url(#spot)" opacity="1.00"/>
<circle cx="808" cy="445" r="3.6" fill="url(#spot)" opacity="0.35"/>
<circle cx="1213" cy="618" r="3.6" fill="url(#spot)" opacity="0.60"/>
<circle cx="1002" cy="690" r="3.6" fill="url(#spot)" opacity="0.60"/>
<circle cx="875" cy="530" r="3.6" fill="url(#spot)" opacity="0.35"/>
<circle cx="875" cy="563" r="3.6" fill="url(#spot)" opacity="0.35"/>
<circle cx="498" cy="547" r="3.2" fill="url(#spot)" opacity="0.35"/>
<circle cx="520" cy="524" r="3.2" fill="url(#spot)" opacity="0.35"/>
<circle cx="480" cy="447" r="3.2" fill="url(#spot)" opacity="0.35"/>
<circle cx="125" cy="730" r="3.6" fill="url(#spot)" opacity="1.00"/>
<circle cx="100" cy="650" r="3.6" fill="url(#spot)" opacity="0.60"/>
<circle cx="943" cy="675" r="3.6" fill="url(#spot)" opacity="0.60"/>
<circle cx="925" cy="722" r="3.6" fill="url(#spot)" opacity="1.00"/>

</svg>
<div id="win"></div>
<div id="title"></div>
<span id="tdot"></span><span id="ttxt">Podrobnosti</span>
<div id="body"></div>
<div id="nb"></div>
<div id="tab"></div><span id="tabt">Aktuální podmínky</span>
<div class="btn" id="ba" style="left:1066px"></div><span class="bt" id="bat" style="left:1075px;letter-spacing:-0.22px"><u>A</u>ktualizovat</span>
<div class="btn" id="bz" style="left:1170px"></div><span class="bt" id="bzt" style="left:1206px;letter-spacing:-0.1px"><u>Z</u>avřít</span>
<svg id="dicons" viewBox="688 0 592 442" width="592" height="442" style="position:absolute;left:688px;top:0">
<defs><linearGradient id="cl" x1="0" y1="76" x2="0" y2="99" gradientUnits="userSpaceOnUse"><stop offset="0" stop-color="#fff"/><stop offset="0.55" stop-color="#fbfbfb"/><stop offset="1" stop-color="#d4d4d4"/></linearGradient><filter id="cb" x="-10%" y="-10%" width="120%" height="130%"><feGaussianBlur stdDeviation="0.8"/></filter></defs>
<g id="cloud">
<ellipse cx="1236" cy="97.5" rx="20" ry="2.2" fill="#000" fill-opacity="0.10" filter="url(#cb)"/>
<g fill="#5b95d9"><circle cx="1213.8" cy="91.3" r="3.15"/><circle cx="1218" cy="92" r="3.75"/><circle cx="1222.6" cy="83" r="2.95"/><circle cx="1224" cy="90" r="6.05"/><circle cx="1231" cy="88.5" r="7.55"/><circle cx="1238" cy="79" r="3.45"/><circle cx="1238" cy="87" r="9.05"/><circle cx="1246" cy="84.5" r="3.75"/><circle cx="1245" cy="90" r="6.55"/><circle cx="1251" cy="91.5" r="4.55"/><circle cx="1256" cy="93" r="3.15"/><circle cx="1228" cy="93" r="4.55"/><circle cx="1236" cy="93" r="5.05"/><circle cx="1243" cy="93" r="4.05"/><circle cx="1221" cy="93" r="3.55"/></g>
<g fill="#fff"><circle cx="1213.8" cy="91.3" r="2.15"/><circle cx="1218" cy="92" r="2.75"/><circle cx="1222.6" cy="83" r="1.95"/><circle cx="1224" cy="90" r="5.05"/><circle cx="1231" cy="88.5" r="6.55"/><circle cx="1238" cy="79" r="2.45"/><circle cx="1238" cy="87" r="8.05"/><circle cx="1246" cy="84.5" r="2.75"/><circle cx="1245" cy="90" r="5.55"/><circle cx="1251" cy="91.5" r="3.55"/><circle cx="1256" cy="93" r="2.15"/><circle cx="1228" cy="93" r="3.55"/><circle cx="1236" cy="93" r="4.05"/><circle cx="1243" cy="93" r="3.05"/><circle cx="1221" cy="93" r="2.55"/></g>
<ellipse cx="1236" cy="92.5" rx="17" ry="4" fill="#d8d8d8" fill-opacity="0.8" filter="url(#cb)"/>
<ellipse cx="1234" cy="88" rx="13" ry="4.5" fill="#fff" fill-opacity="0.9" filter="url(#cb)"/>
</g>
<path d="M1268 7.2L1273.2 12.4M1273.2 7.2L1268 12.4" stroke="#b8b886" stroke-width="1.1" fill="none"/>
<rect x="1193" y="409" width="10" height="10" rx="1.6" fill="#f8610f"/><rect x="1193.5" y="409.5" width="9" height="9" rx="1.3" fill="none" stroke="#ff8a48" stroke-width="0.6"/><path d="M1195.4 411.4L1200.6 416.6M1200.6 411.4L1195.4 416.6" stroke="#fff" stroke-width="1.9" stroke-linecap="square"/>
</svg>

<div id="rows">
<span class="l" id="l0" style="top:78px;left:718.21px;letter-spacing:0.323px">Město:</span><span class="v" id="v0" style="top:78px;left:863.35px;letter-spacing:0.115px">Brno</span>
<span class="l" id="l1" style="top:101px;left:718.18px;letter-spacing:-0.055px">Poslední aktualizace:</span><span class="v" id="v1" style="top:101px;left:863.71px;letter-spacing:-0.152px">So 05. led, 14:00</span>
<span class="l" id="l2" style="top:124px;left:718.21px;letter-spacing:0.099px">Podmínky:</span><span class="v" id="v2" style="top:124px;left:863.5px;letter-spacing:0px">-</span>
<span class="l" id="l3" style="top:147px;left:718.45px;letter-spacing:-0.021px">Obloha:</span><span class="v" id="v3" style="top:147px;left:863.93px;letter-spacing:0.18px">Zataženo</span>
<span class="l" id="l4" style="top:170px;left:719.47px;letter-spacing:-0.205px">Teplota:</span><span class="v" id="v4" style="top:170px;left:864.01px;letter-spacing:-0.039px">-4,0 °C</span>
<span class="l" id="l5" style="top:193px;left:718.21px;letter-spacing:-0.03px">Připadá jako:</span><span class="v" id="v5" style="top:193px;left:864.01px;letter-spacing:-0.06px">-11,2 °C</span>
<span class="l" id="l6" style="top:216px;left:718.21px;letter-spacing:-0.144px">Rosný bod:</span><span class="v" id="v6" style="top:216px;left:864.01px;letter-spacing:-0.039px">-9,0 °C</span>
<span class="l" id="l7" style="top:239px;left:718.21px;letter-spacing:-0.249px">Relativní vlhkost:</span><span class="v" id="v7" style="top:239px;left:863.61px;letter-spacing:-0.205px">68%</span>
<span class="l" id="l8" style="top:262px;left:718.6px;letter-spacing:0.021px">Vítr:</span><span class="v" id="v8" style="top:262px;left:864.67px;letter-spacing:-0.291px">Jihovýchod / 7,2 m/s</span>
<span class="l" id="l9" style="top:285px;left:719.02px;letter-spacing:-0.4px">Tlak:</span><span class="v" id="v9" style="top:285px;left:864.13px;letter-spacing:-0.217px">1020,00 hPa</span>
<span class="l" id="l10" style="top:308px;left:718.6px;letter-spacing:-0.067px">Viditelnost:</span><span class="v" id="v10" style="top:308px;left:864.13px;letter-spacing:-0.172px">10,0 km</span>
<span class="l" id="l11" style="top:331px;left:718.93px;letter-spacing:-0.097px">Východ slunce:</span><span class="v" id="v11" style="top:331px;left:863.77px;letter-spacing:-0.309px">07:49</span>
<span class="l" id="l12" style="top:354px;left:718.96px;letter-spacing:0.054px">Západ slunce:</span><span class="v" id="v12" style="top:354px;left:863.8px;letter-spacing:-0.262px">16:11</span>
</div>
<div id="panel"></div>
<div id="task"></div>
<svg id="picons" viewBox="0 772 1280 28" width="1280" height="28" style="position:absolute;left:0;top:772px">
<defs>
<radialGradient id="ffb" cx="0.45" cy="0.3" r="0.7"><stop offset="0" stop-color="#9fd0f0"/><stop offset="0.45" stop-color="#3a78c8"/><stop offset="1" stop-color="#0a1c5a"/></radialGradient>
<linearGradient id="ffo" x1="0" y1="0" x2="1" y2="1"><stop offset="0" stop-color="#f08a1a"/><stop offset="0.45" stop-color="#e8500c"/><stop offset="0.75" stop-color="#d82c08"/><stop offset="1" stop-color="#f09018"/></linearGradient>
<linearGradient id="ffy" x1="1" y1="0" x2="0.2" y2="1"><stop offset="0" stop-color="#ffe838"/><stop offset="0.5" stop-color="#f8a818"/><stop offset="1" stop-color="#e8600e"/></linearGradient>
<linearGradient id="mailg" x1="0" y1="0" x2="0" y2="1"><stop offset="0" stop-color="#e8e8e8"/><stop offset="1" stop-color="#ffffff"/></linearGradient>
<radialGradient id="grn" cx="0.45" cy="0.35" r="0.7"><stop offset="0" stop-color="#b4e08a"/><stop offset="0.7" stop-color="#8acb52"/><stop offset="1" stop-color="#6ab030"/></radialGradient>
<linearGradient id="redb" x1="0" y1="0" x2="0" y2="1"><stop offset="0" stop-color="#f05050"/><stop offset="0.5" stop-color="#e01010"/><stop offset="1" stop-color="#c80000"/></linearGradient>
<linearGradient id="spk" x1="0" y1="0" x2="1" y2="0"><stop offset="0" stop-color="#f0f0f0"/><stop offset="1" stop-color="#9a9a9a"/></linearGradient>
<g id="hdl" fill="#fff"><rect x="0" y="0" width="2" height="2"/><rect x="3" y="0" width="2" height="2"/><rect x="0" y="3" width="2" height="2"/><rect x="3" y="3" width="2" height="2"/><rect x="0" y="6" width="2" height="2"/><rect x="3" y="6" width="2" height="2"/><rect x="0" y="9" width="2" height="2"/><rect x="3" y="9" width="2" height="2"/><rect x="0" y="12" width="2" height="2"/><rect x="3" y="12" width="2" height="2"/><rect x="0" y="15" width="2" height="2"/><rect x="3" y="15" width="2" height="2"/></g>
<g id="fox">
<circle cx="0" cy="0" r="9.7" fill="url(#ffy)"/>
<path d="M-9.7 0 A9.7 9.7 0 0 0 8.6 4.4 C6 6.6 2.6 7.2 -0.4 6.2 C-4 5 -6 2 -6.4 -1 L-9.4 -2.4 Z" fill="url(#ffo)"/>
<circle cx="1.1" cy="-2" r="7.3" fill="url(#ffb)"/>
<path d="M-5.4 2.2 C-3.6 5.2 0.2 6.4 3.6 5.2 C6 4.4 7.8 2.4 8.4 0.2 C7.2 2 5 3.2 2.8 3.2 C0.4 3.4 -1.6 2.4 -2.6 0.6 Z" fill="#0a1a52" fill-opacity="0.75"/>
<path d="M-9.3 -2.8 C-9 -5.2 -8.2 -7 -7.4 -8.8 C-6.6 -8 -6 -7.2 -5.4 -6.6 C-4 -7.4 -2.2 -7.4 -0.8 -6.8 C-2.4 -6.2 -3.2 -5 -3 -3.6 C-1.8 -3.6 -0.6 -3.2 0.6 -2.6 C-0.2 -1.2 -1.8 -0.4 -3.4 -0.4 C-2.8 1.6 -1 2.8 1.2 2.8 C-0.4 4.4 -3.4 4.4 -5.4 2.8 C-7.6 1.2 -9.2 -0.6 -9.3 -2.8Z" fill="#f07a14"/>
<path d="M-9.3 -2.8 C-9 -5.2 -8.2 -7 -7.4 -8.8 C-6.6 -8 -6 -7.2 -5.4 -6.6 C-6.6 -5.4 -7 -3.6 -6.6 -1.6 C-6.2 0.6 -5.8 1.8 -5.4 2.8 C-7.6 1.2 -9.2 -0.6 -9.3 -2.8Z" fill="#e8560e" fill-opacity="0.7"/>
</g>
</defs>
<!-- ubuntu logo -->
<g id="ubu"><mask id="um" maskUnits="userSpaceOnUse" x="0" y="772" width="40" height="28"><rect x="0" y="772" width="40" height="28" fill="#fff"/><circle cx="10.50" cy="787.60" r="2.9" fill="#000"/><circle cx="24.90" cy="779.29" r="2.9" fill="#000"/><circle cx="24.90" cy="795.91" r="2.9" fill="#000"/></mask><g mask="url(#um)"><path d="M15.36 793.67 A7.7 7.7 0 0 1 15.36 781.53 L17.45 784.21 A4.3 4.3 0 0 0 17.45 790.99 Z" fill="#ff9c0a"/><path d="M17.22 780.46 A7.7 7.7 0 0 1 27.73 786.53 L24.36 787.00 A4.3 4.3 0 0 0 18.49 783.61 Z" fill="#ff500a"/><path d="M27.73 788.67 A7.7 7.7 0 0 1 17.22 794.74 L18.49 791.59 A4.3 4.3 0 0 0 24.36 788.20 Z" fill="#dc0000"/></g><circle cx="10.50" cy="787.60" r="2.0" fill="#ff500a"/><circle cx="24.90" cy="779.29" r="2.0" fill="#dc0000"/><circle cx="24.90" cy="795.91" r="2.0" fill="#ff9c0a"/></g>
<!-- firefox launcher -->
<use href="#fox" transform="translate(221.2 787) scale(1.0)"/>
<!-- mail -->
<g id="mail">
<path d="M233.5 783.6 L241 777.3 L244.2 777.3 L251.7 783.6 L251.7 796.4 L233.5 796.4 Z" fill="#fdfdfd" stroke="#d6d6d6" stroke-width="0.6"/>
<path d="M235 784.2 L241.4 778.8 L243.8 778.8 L250.2 784.2 L250.2 786 C245 786.5 240 786.8 235 789 Z" fill="url(#mailg)"/>
<path d="M235.5 786.5 C238 790 240 791 242.6 791 C245.2 791 247.5 789.5 249.8 786.5 M235.2 795.2 L240.6 790.6 M250 795.2 L244.6 790.6" fill="none" stroke="#b8b8b8" stroke-width="0.9"/>
</g>
<use href="#hdl" x="257" y="780"/>
<!-- minimized firefox -->
<g opacity="0.62"><use href="#fox" transform="translate(279.8 787.6) scale(0.8)"/></g>
<!-- task icon (weather) -->
<g id="tic"><g fill="#5e6468"><circle cx="482.8" cy="781.9" r="2.15"/><circle cx="482.2" cy="785.4" r="4.45"/><circle cx="478.2" cy="787.8" r="3.45"/><circle cx="486.6" cy="787.8" r="3.45"/><circle cx="476" cy="789" r="2.35"/><circle cx="489.2" cy="789" r="2.35"/><circle cx="482.4" cy="788.6" r="3.65"/></g><g fill="#b2b3ab"><circle cx="482.8" cy="781.9" r="1.35"/><circle cx="482.2" cy="785.4" r="3.65"/><circle cx="478.2" cy="787.8" r="2.65"/><circle cx="486.6" cy="787.8" r="2.65"/><circle cx="476" cy="789" r="1.55"/><circle cx="489.2" cy="789" r="1.55"/><circle cx="482.4" cy="788.6" r="2.85"/></g><path d="M474.8 790.6 C477 792.6 487.6 792.6 490.4 790.6" fill="none" stroke="#5a8ed0" stroke-width="1" stroke-opacity="0.9"/><path d="M482.3 790.5 L476.6 795.8 M482.3 790.5 L488 795.8 M481.2 793.4 L479.6 795.8 M483.4 793.4 L485.2 795.8" fill="none" stroke="#6aa0e4" stroke-width="1.1"/><path d="M482.3 788.6 L482.3 793.6" stroke="#fff" stroke-width="1.1"/></g>
<!-- weather applet -->
<g id="wx">
<path d="M990.6 789.6 C989.4 788 991 786 993 786.4 C993.4 784.6 995.4 783.8 996.8 784.8 C996.2 782.4 996.6 780.2 998.6 780.2 C1000.4 780.2 1000.8 782.4 1000.4 784.4 C1002 784 1003.2 785.2 1003.2 786.6 C1005.4 786.6 1006.6 788.8 1005.2 790.2 C1004 791.4 1002 791 1001.2 790.4 C1000 792.4 996.4 792.6 995 790.8 C993.6 791.6 991.4 791.2 990.6 789.6Z" fill="#fff" stroke="#6aa4e4" stroke-width="1"/>
<ellipse cx="998.4" cy="789.4" rx="4.6" ry="1.6" fill="#e4e4e4"/>
</g>
<use href="#hdl" x="1045" y="780"/>
<!-- rhythmbox speaker -->
<g id="rb">
<path d="M1055 783.5 C1052.6 786 1052.6 790 1055 792.5 M1066.8 783.5 C1069.2 786 1069.2 790 1066.8 792.5" fill="none" stroke="#24468c" stroke-opacity="0.8" stroke-width="1.1"/>
<rect x="1055.8" y="780.6" width="10.2" height="14.6" rx="1" fill="#f2f2f2" stroke="#c8c8c8" stroke-width="0.6"/>
<circle cx="1060.9" cy="785.8" r="3.3" fill="#e0e0e0" stroke="#808080" stroke-width="0.9"/>
<circle cx="1060.9" cy="785.8" r="1.2" fill="#8a8a8a"/>
<circle cx="1058.4" cy="792.4" r="1.3" fill="#d0d0d0" stroke="#808080" stroke-width="0.7"/>
<circle cx="1063.4" cy="792.4" r="1.3" fill="#d0d0d0" stroke="#808080" stroke-width="0.7"/>
</g>
<!-- chat + presence -->
<g id="im">
<path d="M1071.2 778.2 L1085.2 778.2 L1085.2 789.2 L1076.4 789.2 L1073.8 792.8 L1073.6 789.2 L1071.2 789.2 Z" fill="#f0f0f0" stroke="#fff" stroke-width="0.8"/>
<circle cx="1084" cy="790.8" r="7.2" fill="url(#grn)" stroke="#3f8a10" stroke-width="1"/>
</g>
<!-- network monitors -->
<g id="net">
<rect x="1103.2" y="780.2" width="12" height="8.6" rx="0.8" fill="#0a0a0a" stroke="#dcdcd6" stroke-width="1.3"/>
<rect x="1101.2" y="784.4" width="12" height="8.4" rx="0.8" fill="#0a0a0a" stroke="#e6e6e0" stroke-width="1.3"/>
<rect x="1102.4" y="785.6" width="9.6" height="2.4" fill="#3a3a3a"/>
<rect x="1105.6" y="793.4" width="3.4" height="1.6" fill="#1a1a1a"/>
<rect x="1101.8" y="794.8" width="11" height="1.4" rx="0.7" fill="#1c1c1c"/>
</g>
<!-- volume -->
<g id="vol">
<rect x="1125.6" y="784.4" width="3.6" height="5.8" rx="0.6" fill="#fafafa" stroke="#e0e0e0" stroke-width="0.5"/>
<path d="M1126.6 786 h1.4 M1126.6 788.6 h1.4" stroke="#555" stroke-width="0.8"/>
<path d="M1129.4 785 L1134 780.8 L1134 794.2 L1129.4 789.8 Z" fill="url(#spk)" stroke="#e8e8e8" stroke-width="0.5"/>
<path d="M1136.7 784.4 C1137.1 786.4 1137.1 788.8 1136.7 790.8 M1140.2 781.2 C1140.6 785.4 1140.6 789.8 1140.2 794" fill="none" stroke="#1a0a04" stroke-width="1.3"/>
</g>
<!-- shutdown -->
<g id="pwr">
<rect x="1259.5" y="777.3" width="19.6" height="19.4" rx="1.6" fill="url(#redb)" stroke="#a80000" stroke-width="0.8"/>
<path d="M1265.6 782.6 A6.2 6.2 0 1 0 1273.2 782.6" fill="none" stroke="#fff" stroke-width="2.3" stroke-linecap="round"/>
<path d="M1269.4 779.6 L1269.4 786.6" stroke="#fff" stroke-width="2.3" stroke-linecap="round"/>
</g>
</svg>
<span class="pt" id="p1" style="left:35px;letter-spacing:-0.2px">Aplikace</span>
<span class="pt" id="p2" style="left:104px">Místa</span>
<span class="pt" id="p3" style="left:153.5px;letter-spacing:0.2px">Systém</span>
<span class="pt" id="p4" style="left:296px;letter-spacing:-0.2px">[Mozilla Firefox]</span>
<span class="pt" id="p7" style="left:498px;top:781px;color:#222;letter-spacing:0.1px">Podrobnosti</span>
<span class="pt" id="p5" style="left:1008.8px;letter-spacing:-0.15px">-4 °C</span>
<span class="pt" id="p6" style="left:1145.5px;top:781px;white-space:pre;letter-spacing:-0.17px">So,  5. led, 14:20</span>

</body>
</html>
